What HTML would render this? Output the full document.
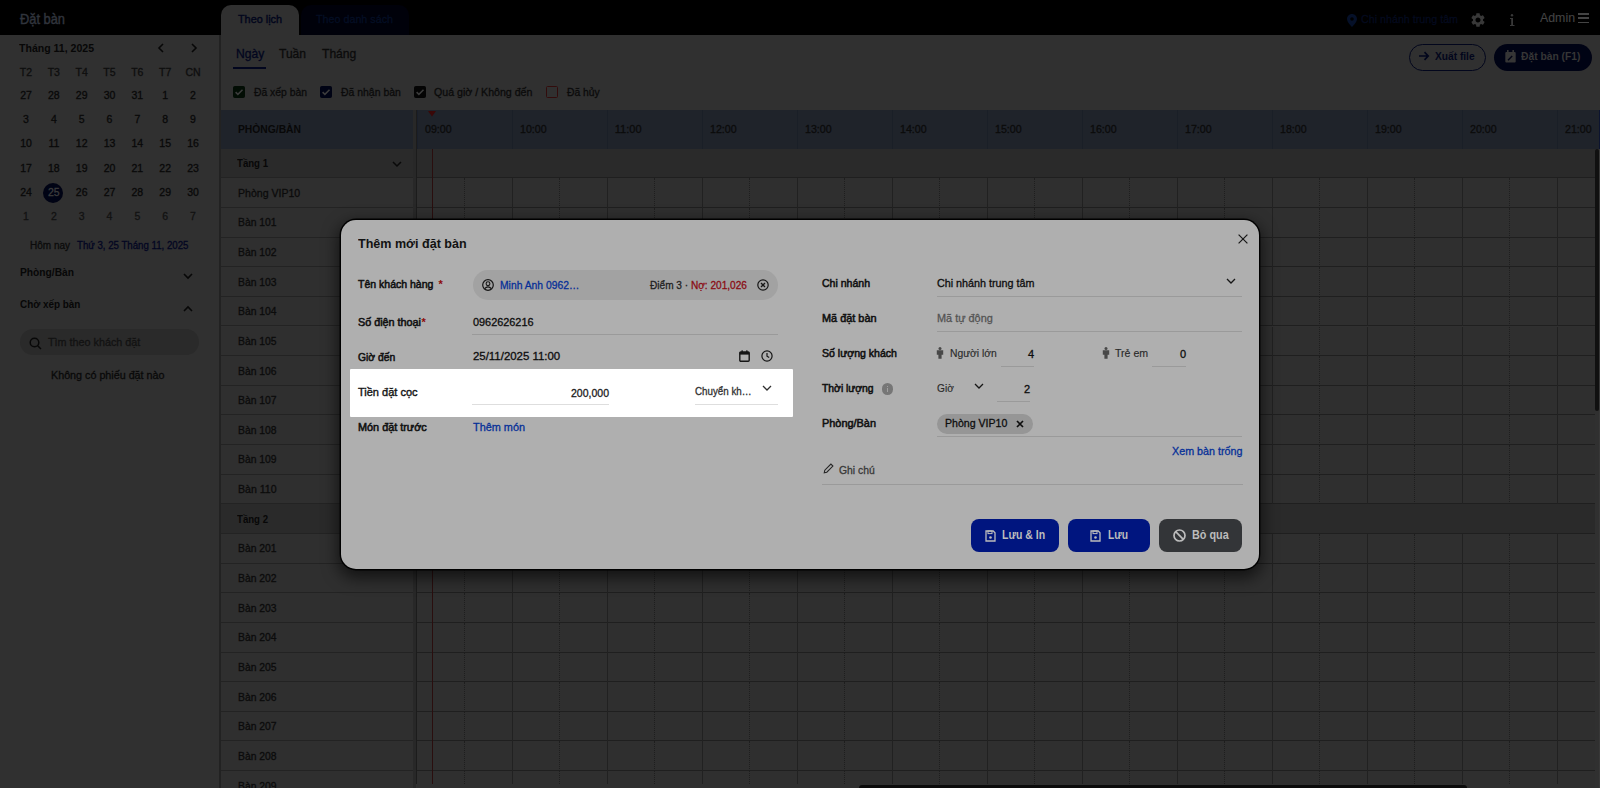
<!DOCTYPE html>
<html><head><meta charset="utf-8"><title>Đặt bàn</title>
<style>*{box-sizing:border-box;margin:0;padding:0}html,body{width:1600px;height:788px;overflow:hidden;background:#303030;font-family:"Liberation Sans",sans-serif;position:relative}.a{position:absolute;white-space:nowrap;line-height:1}svg.a{overflow:visible}</style></head><body>
<div class="a" style="left:0;top:0;width:1600px;height:35px;background:#000"></div>
<div class="a" style="left:0;top:35px;width:219px;height:753px;background:#303030"></div>
<div class="a" style="left:219px;top:35px;width:2px;height:753px;background:#222"></div>
<div class="a" style="left:221px;top:35px;width:1379px;height:753px;background:#303030"></div>
<div class="a" style="left:20.00px;top:12.14px;font-size:14px;color:#30343c;-webkit-text-stroke:0.45px #30343c;transform:scaleX(0.9175);transform-origin:0 0;">Đặt bàn</div>
<div class="a" style="left:221px;top:5px;width:78px;height:30px;background:#303030;border-radius:10px 10px 0 0"></div>
<div class="a" style="left:238.00px;top:14.11px;font-size:11px;color:#02061c;-webkit-text-stroke:0.4px #02061c;transform:scaleX(0.9856);transform-origin:0 0;">Theo lịch</div>
<div class="a" style="left:300.5px;top:5px;width:108.5px;height:30px;background:#00010a;border-radius:10px 10px 0 0"></div>
<div class="a" style="left:315.80px;top:14.11px;font-size:11px;color:#040e24;-webkit-text-stroke:0.3px #040e24;transform:scaleX(0.9760);transform-origin:0 0;">Theo danh sách</div>
<svg class="a" style="left:1347px;top:13.5px" width="10" height="13" viewBox="0 0 10 13"><path d="M5 0C2.2 0 0 2.2 0 5c0 3.4 5 8 5 8s5-4.6 5-8C10 2.2 7.8 0 5 0zm0 6.8A1.8 1.8 0 1 1 5 3.2a1.8 1.8 0 0 1 0 3.6z" fill="#051028"/></svg>
<div class="a" style="left:1361.00px;top:14.11px;font-size:11px;color:#040a1e;-webkit-text-stroke:0.3px #040a1e;transform:scaleX(0.9732);transform-origin:0 0;">Chi nhánh trung tâm</div>
<svg class="a" style="left:1470.5px;top:13px" width="14" height="14" viewBox="2 2 20 20"><path fill="#383838" d="M19.14 12.94c.04-.3.06-.61.06-.94 0-.32-.02-.64-.07-.94l2.03-1.58a.49.49 0 0 0 .12-.61l-1.92-3.32a.49.49 0 0 0-.59-.22l-2.39.96c-.5-.38-1.03-.7-1.62-.94l-.36-2.54a.48.48 0 0 0-.48-.41h-3.84c-.24 0-.43.17-.47.41l-.36 2.54c-.59.24-1.13.57-1.62.94l-2.39-.96a.48.48 0 0 0-.59.22L2.74 8.87c-.12.21-.08.47.12.61l2.03 1.58c-.05.3-.09.63-.09.94s.02.64.07.94l-2.03 1.58a.49.49 0 0 0-.12.61l1.92 3.32c.12.22.37.29.59.22l2.39-.96c.5.38 1.03.7 1.62.94l.36 2.54c.05.24.24.41.48.41h3.84c.24 0 .44-.17.47-.41l.36-2.54c.59-.24 1.13-.56 1.62-.94l2.39.96c.22.08.47 0 .59-.22l1.92-3.32c.12-.22.07-.47-.12-.61l-2.01-1.58zM12 15.6c-1.98 0-3.6-1.62-3.6-3.6s1.62-3.6 3.6-3.6 3.6 1.62 3.6 3.6-1.62 3.6-3.6 3.6z"/></svg>
<svg class="a" style="left:1508.8px;top:14.2px" width="6" height="12" viewBox="0 0 6 12"><circle cx="3" cy="1.3" r="1.2" fill="#383838"/><path d="M1 4h3v7h1.5v1h-4.5v-1h1.2V5H1z" fill="#383838"/></svg>
<div class="a" style="left:1539.50px;top:11.23px;font-size:13px;color:#444444;-webkit-text-stroke:0.1px #444;transform:scaleX(0.9496);transform-origin:0 0;">Admin</div>
<div class="a" style="left:1577.8px;top:12.9px;width:11.5px;height:1.7px;background:#444"></div><div class="a" style="left:1577.8px;top:17.3px;width:11.5px;height:1.7px;background:#444"></div><div class="a" style="left:1577.8px;top:21.7px;width:11.5px;height:1.7px;background:#444"></div>
<div class="a" style="left:19.00px;top:43.11px;font-size:11px;color:#070707;font-weight:bold;transform:scaleX(0.9583);transform-origin:0 0;">Tháng 11, 2025</div>
<svg class="a" style="left:156.5px;top:43px" width="8" height="10" viewBox="0 0 8 10"><path d="M6 1L2 5l4 4" stroke="#070707" stroke-width="1.6" fill="none"/></svg>
<svg class="a" style="left:190px;top:43px" width="8" height="10" viewBox="0 0 8 10"><path d="M2 1l4 4-4 4" stroke="#070707" stroke-width="1.6" fill="none"/></svg>
<div class="a" style="left:19.87px;top:66.86px;font-size:10.5px;color:#0e0e0e;-webkit-text-stroke:0.3px #0e0e0e;">T2</div>
<div class="a" style="left:47.70px;top:66.86px;font-size:10.5px;color:#0e0e0e;-webkit-text-stroke:0.3px #0e0e0e;">T3</div>
<div class="a" style="left:75.53px;top:66.86px;font-size:10.5px;color:#0e0e0e;-webkit-text-stroke:0.3px #0e0e0e;">T4</div>
<div class="a" style="left:103.37px;top:66.86px;font-size:10.5px;color:#0e0e0e;-webkit-text-stroke:0.3px #0e0e0e;">T5</div>
<div class="a" style="left:131.20px;top:66.86px;font-size:10.5px;color:#0e0e0e;-webkit-text-stroke:0.3px #0e0e0e;">T6</div>
<div class="a" style="left:159.03px;top:66.86px;font-size:10.5px;color:#0e0e0e;-webkit-text-stroke:0.3px #0e0e0e;">T7</div>
<div class="a" style="left:185.41px;top:66.86px;font-size:10.5px;color:#0e0e0e;-webkit-text-stroke:0.3px #0e0e0e;">CN</div>
<div class="a" style="left:20.16px;top:89.86px;font-size:10.5px;color:#090909;-webkit-text-stroke:0.3px #090909;">27</div>
<div class="a" style="left:47.99px;top:89.86px;font-size:10.5px;color:#090909;-webkit-text-stroke:0.3px #090909;">28</div>
<div class="a" style="left:75.82px;top:89.86px;font-size:10.5px;color:#090909;-webkit-text-stroke:0.3px #090909;">29</div>
<div class="a" style="left:103.66px;top:89.86px;font-size:10.5px;color:#090909;-webkit-text-stroke:0.3px #090909;">30</div>
<div class="a" style="left:131.49px;top:89.86px;font-size:10.5px;color:#090909;-webkit-text-stroke:0.3px #090909;">31</div>
<div class="a" style="left:162.24px;top:89.86px;font-size:10.5px;color:#090909;-webkit-text-stroke:0.3px #090909;">1</div>
<div class="a" style="left:190.08px;top:89.86px;font-size:10.5px;color:#090909;-webkit-text-stroke:0.3px #090909;">2</div>
<div class="a" style="left:23.08px;top:113.86px;font-size:10.5px;color:#090909;-webkit-text-stroke:0.3px #090909;">3</div>
<div class="a" style="left:50.91px;top:113.86px;font-size:10.5px;color:#090909;-webkit-text-stroke:0.3px #090909;">4</div>
<div class="a" style="left:78.74px;top:113.86px;font-size:10.5px;color:#090909;-webkit-text-stroke:0.3px #090909;">5</div>
<div class="a" style="left:106.58px;top:113.86px;font-size:10.5px;color:#090909;-webkit-text-stroke:0.3px #090909;">6</div>
<div class="a" style="left:134.41px;top:113.86px;font-size:10.5px;color:#090909;-webkit-text-stroke:0.3px #090909;">7</div>
<div class="a" style="left:162.24px;top:113.86px;font-size:10.5px;color:#090909;-webkit-text-stroke:0.3px #090909;">8</div>
<div class="a" style="left:190.08px;top:113.86px;font-size:10.5px;color:#090909;-webkit-text-stroke:0.3px #090909;">9</div>
<div class="a" style="left:20.16px;top:138.35px;font-size:10.5px;color:#090909;-webkit-text-stroke:0.3px #090909;">10</div>
<div class="a" style="left:48.38px;top:138.35px;font-size:10.5px;color:#090909;-webkit-text-stroke:0.3px #090909;">11</div>
<div class="a" style="left:75.82px;top:138.35px;font-size:10.5px;color:#090909;-webkit-text-stroke:0.3px #090909;">12</div>
<div class="a" style="left:103.66px;top:138.35px;font-size:10.5px;color:#090909;-webkit-text-stroke:0.3px #090909;">13</div>
<div class="a" style="left:131.49px;top:138.35px;font-size:10.5px;color:#090909;-webkit-text-stroke:0.3px #090909;">14</div>
<div class="a" style="left:159.32px;top:138.35px;font-size:10.5px;color:#090909;-webkit-text-stroke:0.3px #090909;">15</div>
<div class="a" style="left:187.16px;top:138.35px;font-size:10.5px;color:#090909;-webkit-text-stroke:0.3px #090909;">16</div>
<div class="a" style="left:20.16px;top:162.85px;font-size:10.5px;color:#090909;-webkit-text-stroke:0.3px #090909;">17</div>
<div class="a" style="left:47.99px;top:162.85px;font-size:10.5px;color:#090909;-webkit-text-stroke:0.3px #090909;">18</div>
<div class="a" style="left:75.82px;top:162.85px;font-size:10.5px;color:#090909;-webkit-text-stroke:0.3px #090909;">19</div>
<div class="a" style="left:103.66px;top:162.85px;font-size:10.5px;color:#090909;-webkit-text-stroke:0.3px #090909;">20</div>
<div class="a" style="left:131.49px;top:162.85px;font-size:10.5px;color:#090909;-webkit-text-stroke:0.3px #090909;">21</div>
<div class="a" style="left:159.32px;top:162.85px;font-size:10.5px;color:#090909;-webkit-text-stroke:0.3px #090909;">22</div>
<div class="a" style="left:187.16px;top:162.85px;font-size:10.5px;color:#090909;-webkit-text-stroke:0.3px #090909;">23</div>
<div class="a" style="left:20.16px;top:187.35px;font-size:10.5px;color:#090909;-webkit-text-stroke:0.3px #090909;">24</div>
<div class="a" style="left:42.9px;top:183.1px;width:20px;height:20px;border-radius:50%;background:#000314"></div>
<div class="a" style="left:47.99px;top:187.35px;font-size:10.5px;color:#3c3c3c;-webkit-text-stroke:0.3px #3c3c3c;">25</div>
<div class="a" style="left:75.82px;top:187.35px;font-size:10.5px;color:#090909;-webkit-text-stroke:0.3px #090909;">26</div>
<div class="a" style="left:103.66px;top:187.35px;font-size:10.5px;color:#090909;-webkit-text-stroke:0.3px #090909;">27</div>
<div class="a" style="left:131.49px;top:187.35px;font-size:10.5px;color:#090909;-webkit-text-stroke:0.3px #090909;">28</div>
<div class="a" style="left:159.32px;top:187.35px;font-size:10.5px;color:#090909;-webkit-text-stroke:0.3px #090909;">29</div>
<div class="a" style="left:187.16px;top:187.35px;font-size:10.5px;color:#090909;-webkit-text-stroke:0.3px #090909;">30</div>
<div class="a" style="left:23.08px;top:211.35px;font-size:10.5px;color:#121212;-webkit-text-stroke:0.3px #121212;">1</div>
<div class="a" style="left:50.91px;top:211.35px;font-size:10.5px;color:#121212;-webkit-text-stroke:0.3px #121212;">2</div>
<div class="a" style="left:78.74px;top:211.35px;font-size:10.5px;color:#121212;-webkit-text-stroke:0.3px #121212;">3</div>
<div class="a" style="left:106.58px;top:211.35px;font-size:10.5px;color:#121212;-webkit-text-stroke:0.3px #121212;">4</div>
<div class="a" style="left:134.41px;top:211.35px;font-size:10.5px;color:#121212;-webkit-text-stroke:0.3px #121212;">5</div>
<div class="a" style="left:162.24px;top:211.35px;font-size:10.5px;color:#121212;-webkit-text-stroke:0.3px #121212;">6</div>
<div class="a" style="left:190.08px;top:211.35px;font-size:10.5px;color:#121212;-webkit-text-stroke:0.3px #121212;">7</div>
<div class="a" style="left:30.00px;top:240.60px;font-size:10px;color:#0b0b0b;-webkit-text-stroke:0.3px #0b0b0b;">Hôm nay</div>
<div class="a" style="left:77.20px;top:240.60px;font-size:10px;color:#030622;-webkit-text-stroke:0.3px #030622;transform:scaleX(0.9669);transform-origin:0 0;">Thứ 3, 25 Tháng 11, 2025</div>
<div class="a" style="left:19.80px;top:267.11px;font-size:11px;color:#070707;font-weight:bold;transform:scaleX(0.9300);transform-origin:0 0;">Phòng/Bàn</div>
<svg class="a" style="left:182.5px;top:273px" width="10" height="7" viewBox="0 0 10 7"><path d="M1 1l4 4 4-4" stroke="#070707" stroke-width="1.6" fill="none"/></svg>
<div class="a" style="left:19.80px;top:298.61px;font-size:11px;color:#070707;font-weight:bold;transform:scaleX(0.9000);transform-origin:0 0;">Chờ xếp bàn</div>
<svg class="a" style="left:182.5px;top:305px" width="10" height="7" viewBox="0 0 10 7"><path d="M1 6l4-4 4 4" stroke="#070707" stroke-width="1.6" fill="none"/></svg>
<div class="a" style="left:20px;top:329px;width:179px;height:26px;border-radius:13px;background:#2a2a2a"></div>
<svg class="a" style="left:29px;top:337px" width="13" height="13" viewBox="0 0 13 13"><circle cx="5.5" cy="5.5" r="4.3" stroke="#080808" stroke-width="1.5" fill="none"/><path d="M8.7 8.7l3.3 3.3" stroke="#080808" stroke-width="1.5"/></svg>
<div class="a" style="left:47.90px;top:337.11px;font-size:11px;color:#121212;-webkit-text-stroke:0.3px #121212;transform:scaleX(0.9801);transform-origin:0 0;">Tìm theo khách đặt</div>
<div class="a" style="left:50.50px;top:369.61px;font-size:11px;color:#090909;-webkit-text-stroke:0.3px #090909;transform:scaleX(0.9766);transform-origin:0 0;">Không có phiếu đặt nào</div>
<div class="a" style="left:235.60px;top:47.88px;font-size:12.5px;color:#02061e;-webkit-text-stroke:0.3px #02061e;transform:scaleX(0.9662);transform-origin:0 0;">Ngày</div>
<div class="a" style="left:233px;top:66.5px;width:33px;height:2px;background:#02061e"></div>
<div class="a" style="left:279.40px;top:47.88px;font-size:12.5px;color:#0b0b0b;-webkit-text-stroke:0.3px #0b0b0b;transform:scaleX(0.9632);transform-origin:0 0;">Tuần</div>
<div class="a" style="left:321.90px;top:47.88px;font-size:12.5px;color:#0b0b0b;-webkit-text-stroke:0.3px #0b0b0b;transform:scaleX(0.9675);transform-origin:0 0;">Tháng</div>
<div class="a" style="left:233px;top:86px;width:12px;height:12px;border-radius:1.5px;background:#020d04;border:1.5px solid #020d04"></div><svg class="a" style="left:233px;top:86px" width="12" height="12" viewBox="0 0 12 12"><path d="M2.6 6.1l2.3 2.3 4.6-4.6" stroke="#3c3c3c" stroke-width="1.5" fill="none"/></svg>
<div class="a" style="left:254.40px;top:86.61px;font-size:11px;color:#0b0b0b;-webkit-text-stroke:0.3px #0b0b0b;transform:scaleX(0.9420);transform-origin:0 0;">Đã xếp bàn</div>
<div class="a" style="left:320px;top:86px;width:12px;height:12px;border-radius:1.5px;background:#000314;border:1.5px solid #000314"></div><svg class="a" style="left:320px;top:86px" width="12" height="12" viewBox="0 0 12 12"><path d="M2.6 6.1l2.3 2.3 4.6-4.6" stroke="#3c3c3c" stroke-width="1.5" fill="none"/></svg>
<div class="a" style="left:341.20px;top:86.61px;font-size:11px;color:#0b0b0b;-webkit-text-stroke:0.3px #0b0b0b;transform:scaleX(0.9492);transform-origin:0 0;">Đã nhận bàn</div>
<div class="a" style="left:414px;top:86px;width:12px;height:12px;border-radius:1.5px;background:#040404;border:1.5px solid #040404"></div><svg class="a" style="left:414px;top:86px" width="12" height="12" viewBox="0 0 12 12"><path d="M2.6 6.1l2.3 2.3 4.6-4.6" stroke="#3c3c3c" stroke-width="1.5" fill="none"/></svg>
<div class="a" style="left:434.40px;top:86.61px;font-size:11px;color:#0b0b0b;-webkit-text-stroke:0.3px #0b0b0b;transform:scaleX(0.9646);transform-origin:0 0;">Quá giờ / Không đến</div>
<div class="a" style="left:546px;top:86px;width:12px;height:12px;border-radius:1.5px;background:transparent;border:1.5px solid #320c0c"></div>
<div class="a" style="left:567.00px;top:86.61px;font-size:11px;color:#0b0b0b;-webkit-text-stroke:0.3px #0b0b0b;transform:scaleX(0.9409);transform-origin:0 0;">Đã hủy</div>
<div class="a" style="left:1408.5px;top:43.5px;width:77.5px;height:27.5px;border-radius:14px;border:1.5px solid #02061c"></div>
<svg class="a" style="left:1418px;top:49.8px" width="12" height="12" viewBox="0 0 12 12"><path d="M1 6h9.2M6.5 2.2L10.2 6l-3.7 3.8" stroke="#02061c" stroke-width="1.7" fill="none"/></svg>
<div class="a" style="left:1435.20px;top:50.61px;font-size:11px;color:#02061c;font-weight:bold;transform:scaleX(0.9253);transform-origin:0 0;">Xuất file</div>
<div class="a" style="left:1494px;top:43.5px;width:98px;height:27.5px;border-radius:14px;background:#000314"></div>
<svg class="a" style="left:1505px;top:50px" width="11" height="12.5" viewBox="0 0 11 12.5"><rect x="0.3" y="2" width="10.4" height="10.5" rx="1" fill="#353535"/><rect x="2" y="0" width="1.6" height="3" fill="#353535"/><rect x="7.4" y="0" width="1.6" height="3" fill="#353535"/><path d="M3 10.3l4.2-4.2" stroke="#000314" stroke-width="1.4"/></svg>
<div class="a" style="left:1520.80px;top:50.81px;font-size:11px;color:#363636;font-weight:bold;transform:scaleX(0.9345);transform-origin:0 0;">Đặt bàn (F1)</div>
<div class="a" style="left:221px;top:110px;width:191.5px;height:38.66px;background:#1f232a"></div>
<div class="a" style="left:416.9px;top:110px;width:1183.1px;height:38.66px;background:#1f232a;border-right:1px solid #0c1430;border-left:1px solid #1a1f2a"></div>
<div class="a" style="left:237.60px;top:123.61px;font-size:11px;color:#080808;font-weight:bold;transform:scaleX(0.9370);transform-origin:0 0;">PHÒNG/BÀN</div>
<div class="a" style="left:424.80px;top:123.61px;font-size:11px;color:#0b0b0b;-webkit-text-stroke:0.3px #0b0b0b;transform:scaleX(0.9698);transform-origin:0 0;">09:00</div>
<div class="a" style="left:512.0px;top:110px;width:1px;height:38.66px;background:#1a1f27"></div>
<div class="a" style="left:519.80px;top:123.61px;font-size:11px;color:#0b0b0b;-webkit-text-stroke:0.3px #0b0b0b;transform:scaleX(0.9698);transform-origin:0 0;">10:00</div>
<div class="a" style="left:607.0px;top:110px;width:1px;height:38.66px;background:#1a1f27"></div>
<div class="a" style="left:614.80px;top:123.61px;font-size:11px;color:#0b0b0b;-webkit-text-stroke:0.3px #0b0b0b;">11:00</div>
<div class="a" style="left:702.0px;top:110px;width:1px;height:38.66px;background:#1a1f27"></div>
<div class="a" style="left:709.80px;top:123.61px;font-size:11px;color:#0b0b0b;-webkit-text-stroke:0.3px #0b0b0b;transform:scaleX(0.9698);transform-origin:0 0;">12:00</div>
<div class="a" style="left:797.0px;top:110px;width:1px;height:38.66px;background:#1a1f27"></div>
<div class="a" style="left:804.80px;top:123.61px;font-size:11px;color:#0b0b0b;-webkit-text-stroke:0.3px #0b0b0b;transform:scaleX(0.9698);transform-origin:0 0;">13:00</div>
<div class="a" style="left:892.0px;top:110px;width:1px;height:38.66px;background:#1a1f27"></div>
<div class="a" style="left:899.80px;top:123.61px;font-size:11px;color:#0b0b0b;-webkit-text-stroke:0.3px #0b0b0b;transform:scaleX(0.9698);transform-origin:0 0;">14:00</div>
<div class="a" style="left:987.0px;top:110px;width:1px;height:38.66px;background:#1a1f27"></div>
<div class="a" style="left:994.80px;top:123.61px;font-size:11px;color:#0b0b0b;-webkit-text-stroke:0.3px #0b0b0b;transform:scaleX(0.9698);transform-origin:0 0;">15:00</div>
<div class="a" style="left:1082.0px;top:110px;width:1px;height:38.66px;background:#1a1f27"></div>
<div class="a" style="left:1089.80px;top:123.61px;font-size:11px;color:#0b0b0b;-webkit-text-stroke:0.3px #0b0b0b;transform:scaleX(0.9698);transform-origin:0 0;">16:00</div>
<div class="a" style="left:1177.0px;top:110px;width:1px;height:38.66px;background:#1a1f27"></div>
<div class="a" style="left:1184.80px;top:123.61px;font-size:11px;color:#0b0b0b;-webkit-text-stroke:0.3px #0b0b0b;transform:scaleX(0.9698);transform-origin:0 0;">17:00</div>
<div class="a" style="left:1272.0px;top:110px;width:1px;height:38.66px;background:#1a1f27"></div>
<div class="a" style="left:1279.80px;top:123.61px;font-size:11px;color:#0b0b0b;-webkit-text-stroke:0.3px #0b0b0b;transform:scaleX(0.9698);transform-origin:0 0;">18:00</div>
<div class="a" style="left:1367.0px;top:110px;width:1px;height:38.66px;background:#1a1f27"></div>
<div class="a" style="left:1374.80px;top:123.61px;font-size:11px;color:#0b0b0b;-webkit-text-stroke:0.3px #0b0b0b;transform:scaleX(0.9698);transform-origin:0 0;">19:00</div>
<div class="a" style="left:1462.0px;top:110px;width:1px;height:38.66px;background:#1a1f27"></div>
<div class="a" style="left:1469.80px;top:123.61px;font-size:11px;color:#0b0b0b;-webkit-text-stroke:0.3px #0b0b0b;transform:scaleX(0.9698);transform-origin:0 0;">20:00</div>
<div class="a" style="left:1557.0px;top:110px;width:1px;height:38.66px;background:#1a1f27"></div>
<div class="a" style="left:1564.80px;top:123.61px;font-size:11px;color:#0b0b0b;-webkit-text-stroke:0.3px #0b0b0b;transform:scaleX(0.9698);transform-origin:0 0;">21:00</div>
<div class="a" style="left:412.5px;top:110px;width:3px;height:678px;background:#282828"></div><div class="a" style="left:415.5px;top:110px;width:1.4px;height:674.4px;background:#1c1c1c"></div>
<div class="a" style="left:221px;top:148.66px;width:191.5px;height:29.64px;background:#2a2a2a;border-bottom:1px solid #232323"></div>
<div class="a" style="left:417px;top:148.66px;width:1178px;height:29.64px;background:#2a2a2a;border-bottom:1px solid #1f1f1f"></div>
<div class="a" style="left:237.30px;top:158.09px;font-size:11px;color:#070707;font-weight:bold;transform:scaleX(0.8744);transform-origin:0 0;">Tầng 1</div>
<div class="a" style="left:221px;top:178.30px;width:191.5px;height:29.64px;background:#2f2f2f;border-bottom:1px solid #232323"></div>
<div class="a" style="left:417px;top:178.30px;width:1178px;height:29.64px;background:#2f2f2f;border-bottom:1px solid #1f1f1f"></div>
<div class="a" style="left:237.70px;top:187.73px;font-size:11px;color:#0b0b0b;-webkit-text-stroke:0.3px #0b0b0b;transform:scaleX(0.9592);transform-origin:0 0;">Phòng VIP10</div>
<div class="a" style="left:221px;top:207.94px;width:191.5px;height:29.64px;background:#2f2f2f;border-bottom:1px solid #232323"></div>
<div class="a" style="left:417px;top:207.94px;width:1178px;height:29.64px;background:#2f2f2f;border-bottom:1px solid #1f1f1f"></div>
<div class="a" style="left:237.70px;top:217.37px;font-size:11px;color:#0b0b0b;-webkit-text-stroke:0.3px #0b0b0b;transform:scaleX(0.9418);transform-origin:0 0;">Bàn 101</div>
<div class="a" style="left:221px;top:237.58px;width:191.5px;height:29.64px;background:#2f2f2f;border-bottom:1px solid #232323"></div>
<div class="a" style="left:417px;top:237.58px;width:1178px;height:29.64px;background:#2f2f2f;border-bottom:1px solid #1f1f1f"></div>
<div class="a" style="left:237.70px;top:247.01px;font-size:11px;color:#0b0b0b;-webkit-text-stroke:0.3px #0b0b0b;transform:scaleX(0.9418);transform-origin:0 0;">Bàn 102</div>
<div class="a" style="left:221px;top:267.22px;width:191.5px;height:29.64px;background:#2f2f2f;border-bottom:1px solid #232323"></div>
<div class="a" style="left:417px;top:267.22px;width:1178px;height:29.64px;background:#2f2f2f;border-bottom:1px solid #1f1f1f"></div>
<div class="a" style="left:237.70px;top:276.65px;font-size:11px;color:#0b0b0b;-webkit-text-stroke:0.3px #0b0b0b;transform:scaleX(0.9418);transform-origin:0 0;">Bàn 103</div>
<div class="a" style="left:221px;top:296.86px;width:191.5px;height:29.64px;background:#2f2f2f;border-bottom:1px solid #232323"></div>
<div class="a" style="left:417px;top:296.86px;width:1178px;height:29.64px;background:#2f2f2f;border-bottom:1px solid #1f1f1f"></div>
<div class="a" style="left:237.70px;top:306.29px;font-size:11px;color:#0b0b0b;-webkit-text-stroke:0.3px #0b0b0b;transform:scaleX(0.9418);transform-origin:0 0;">Bàn 104</div>
<div class="a" style="left:221px;top:326.50px;width:191.5px;height:29.64px;background:#2f2f2f;border-bottom:1px solid #232323"></div>
<div class="a" style="left:417px;top:326.50px;width:1178px;height:29.64px;background:#2f2f2f;border-bottom:1px solid #1f1f1f"></div>
<div class="a" style="left:237.70px;top:335.93px;font-size:11px;color:#0b0b0b;-webkit-text-stroke:0.3px #0b0b0b;transform:scaleX(0.9418);transform-origin:0 0;">Bàn 105</div>
<div class="a" style="left:221px;top:356.14px;width:191.5px;height:29.64px;background:#2f2f2f;border-bottom:1px solid #232323"></div>
<div class="a" style="left:417px;top:356.14px;width:1178px;height:29.64px;background:#2f2f2f;border-bottom:1px solid #1f1f1f"></div>
<div class="a" style="left:237.70px;top:365.57px;font-size:11px;color:#0b0b0b;-webkit-text-stroke:0.3px #0b0b0b;transform:scaleX(0.9418);transform-origin:0 0;">Bàn 106</div>
<div class="a" style="left:221px;top:385.78px;width:191.5px;height:29.64px;background:#2f2f2f;border-bottom:1px solid #232323"></div>
<div class="a" style="left:417px;top:385.78px;width:1178px;height:29.64px;background:#2f2f2f;border-bottom:1px solid #1f1f1f"></div>
<div class="a" style="left:237.70px;top:395.21px;font-size:11px;color:#0b0b0b;-webkit-text-stroke:0.3px #0b0b0b;transform:scaleX(0.9418);transform-origin:0 0;">Bàn 107</div>
<div class="a" style="left:221px;top:415.42px;width:191.5px;height:29.64px;background:#2f2f2f;border-bottom:1px solid #232323"></div>
<div class="a" style="left:417px;top:415.42px;width:1178px;height:29.64px;background:#2f2f2f;border-bottom:1px solid #1f1f1f"></div>
<div class="a" style="left:237.70px;top:424.85px;font-size:11px;color:#0b0b0b;-webkit-text-stroke:0.3px #0b0b0b;transform:scaleX(0.9418);transform-origin:0 0;">Bàn 108</div>
<div class="a" style="left:221px;top:445.06px;width:191.5px;height:29.64px;background:#2f2f2f;border-bottom:1px solid #232323"></div>
<div class="a" style="left:417px;top:445.06px;width:1178px;height:29.64px;background:#2f2f2f;border-bottom:1px solid #1f1f1f"></div>
<div class="a" style="left:237.70px;top:454.49px;font-size:11px;color:#0b0b0b;-webkit-text-stroke:0.3px #0b0b0b;transform:scaleX(0.9418);transform-origin:0 0;">Bàn 109</div>
<div class="a" style="left:221px;top:474.70px;width:191.5px;height:29.64px;background:#2f2f2f;border-bottom:1px solid #232323"></div>
<div class="a" style="left:417px;top:474.70px;width:1178px;height:29.64px;background:#2f2f2f;border-bottom:1px solid #1f1f1f"></div>
<div class="a" style="left:237.70px;top:484.13px;font-size:11px;color:#0b0b0b;-webkit-text-stroke:0.3px #0b0b0b;transform:scaleX(0.9609);transform-origin:0 0;">Bàn 110</div>
<div class="a" style="left:221px;top:504.34px;width:191.5px;height:29.64px;background:#2a2a2a;border-bottom:1px solid #232323"></div>
<div class="a" style="left:417px;top:504.34px;width:1178px;height:29.64px;background:#2a2a2a;border-bottom:1px solid #1f1f1f"></div>
<div class="a" style="left:237.30px;top:513.77px;font-size:11px;color:#070707;font-weight:bold;transform:scaleX(0.8744);transform-origin:0 0;">Tầng 2</div>
<div class="a" style="left:221px;top:533.98px;width:191.5px;height:29.64px;background:#2f2f2f;border-bottom:1px solid #232323"></div>
<div class="a" style="left:417px;top:533.98px;width:1178px;height:29.64px;background:#2f2f2f;border-bottom:1px solid #1f1f1f"></div>
<div class="a" style="left:237.70px;top:543.41px;font-size:11px;color:#0b0b0b;-webkit-text-stroke:0.3px #0b0b0b;transform:scaleX(0.9418);transform-origin:0 0;">Bàn 201</div>
<div class="a" style="left:221px;top:563.62px;width:191.5px;height:29.64px;background:#2f2f2f;border-bottom:1px solid #232323"></div>
<div class="a" style="left:417px;top:563.62px;width:1178px;height:29.64px;background:#2f2f2f;border-bottom:1px solid #1f1f1f"></div>
<div class="a" style="left:237.70px;top:573.05px;font-size:11px;color:#0b0b0b;-webkit-text-stroke:0.3px #0b0b0b;transform:scaleX(0.9418);transform-origin:0 0;">Bàn 202</div>
<div class="a" style="left:221px;top:593.26px;width:191.5px;height:29.64px;background:#2f2f2f;border-bottom:1px solid #232323"></div>
<div class="a" style="left:417px;top:593.26px;width:1178px;height:29.64px;background:#2f2f2f;border-bottom:1px solid #1f1f1f"></div>
<div class="a" style="left:237.70px;top:602.69px;font-size:11px;color:#0b0b0b;-webkit-text-stroke:0.3px #0b0b0b;transform:scaleX(0.9418);transform-origin:0 0;">Bàn 203</div>
<div class="a" style="left:221px;top:622.90px;width:191.5px;height:29.64px;background:#2f2f2f;border-bottom:1px solid #232323"></div>
<div class="a" style="left:417px;top:622.90px;width:1178px;height:29.64px;background:#2f2f2f;border-bottom:1px solid #1f1f1f"></div>
<div class="a" style="left:237.70px;top:632.33px;font-size:11px;color:#0b0b0b;-webkit-text-stroke:0.3px #0b0b0b;transform:scaleX(0.9418);transform-origin:0 0;">Bàn 204</div>
<div class="a" style="left:221px;top:652.54px;width:191.5px;height:29.64px;background:#2f2f2f;border-bottom:1px solid #232323"></div>
<div class="a" style="left:417px;top:652.54px;width:1178px;height:29.64px;background:#2f2f2f;border-bottom:1px solid #1f1f1f"></div>
<div class="a" style="left:237.70px;top:661.97px;font-size:11px;color:#0b0b0b;-webkit-text-stroke:0.3px #0b0b0b;transform:scaleX(0.9418);transform-origin:0 0;">Bàn 205</div>
<div class="a" style="left:221px;top:682.18px;width:191.5px;height:29.64px;background:#2f2f2f;border-bottom:1px solid #232323"></div>
<div class="a" style="left:417px;top:682.18px;width:1178px;height:29.64px;background:#2f2f2f;border-bottom:1px solid #1f1f1f"></div>
<div class="a" style="left:237.70px;top:691.61px;font-size:11px;color:#0b0b0b;-webkit-text-stroke:0.3px #0b0b0b;transform:scaleX(0.9418);transform-origin:0 0;">Bàn 206</div>
<div class="a" style="left:221px;top:711.82px;width:191.5px;height:29.64px;background:#2f2f2f;border-bottom:1px solid #232323"></div>
<div class="a" style="left:417px;top:711.82px;width:1178px;height:29.64px;background:#2f2f2f;border-bottom:1px solid #1f1f1f"></div>
<div class="a" style="left:237.70px;top:721.25px;font-size:11px;color:#0b0b0b;-webkit-text-stroke:0.3px #0b0b0b;transform:scaleX(0.9418);transform-origin:0 0;">Bàn 207</div>
<div class="a" style="left:221px;top:741.46px;width:191.5px;height:29.64px;background:#2f2f2f;border-bottom:1px solid #232323"></div>
<div class="a" style="left:417px;top:741.46px;width:1178px;height:29.64px;background:#2f2f2f;border-bottom:1px solid #1f1f1f"></div>
<div class="a" style="left:237.70px;top:750.89px;font-size:11px;color:#0b0b0b;-webkit-text-stroke:0.3px #0b0b0b;transform:scaleX(0.9418);transform-origin:0 0;">Bàn 208</div>
<div class="a" style="left:221px;top:771.10px;width:191.5px;height:29.64px;background:#2f2f2f;border-bottom:1px solid #232323"></div>
<div class="a" style="left:417px;top:771.10px;width:1178px;height:29.64px;background:#2f2f2f;border-bottom:1px solid #1f1f1f"></div>
<div class="a" style="left:237.70px;top:780.53px;font-size:11px;color:#0b0b0b;-webkit-text-stroke:0.3px #0b0b0b;transform:scaleX(0.9418);transform-origin:0 0;">Bàn 209</div>
<svg class="a" style="left:392px;top:160.5px" width="10" height="7" viewBox="0 0 10 7"><path d="M1 1l4 4 4-4" stroke="#090909" stroke-width="1.5" fill="none"/></svg>
<div class="a" style="left:464.0px;top:178.30px;width:0;height:29.64px;border-left:1px dotted #1e1e1e"></div>
<div class="a" style="left:512.0px;top:178.30px;width:1px;height:29.64px;background:#212121"></div>
<div class="a" style="left:559.0px;top:178.30px;width:0;height:29.64px;border-left:1px dotted #1e1e1e"></div>
<div class="a" style="left:607.0px;top:178.30px;width:1px;height:29.64px;background:#212121"></div>
<div class="a" style="left:654.0px;top:178.30px;width:0;height:29.64px;border-left:1px dotted #1e1e1e"></div>
<div class="a" style="left:702.0px;top:178.30px;width:1px;height:29.64px;background:#212121"></div>
<div class="a" style="left:749.0px;top:178.30px;width:0;height:29.64px;border-left:1px dotted #1e1e1e"></div>
<div class="a" style="left:797.0px;top:178.30px;width:1px;height:29.64px;background:#212121"></div>
<div class="a" style="left:844.0px;top:178.30px;width:0;height:29.64px;border-left:1px dotted #1e1e1e"></div>
<div class="a" style="left:892.0px;top:178.30px;width:1px;height:29.64px;background:#212121"></div>
<div class="a" style="left:939.0px;top:178.30px;width:0;height:29.64px;border-left:1px dotted #1e1e1e"></div>
<div class="a" style="left:987.0px;top:178.30px;width:1px;height:29.64px;background:#212121"></div>
<div class="a" style="left:1034.0px;top:178.30px;width:0;height:29.64px;border-left:1px dotted #1e1e1e"></div>
<div class="a" style="left:1082.0px;top:178.30px;width:1px;height:29.64px;background:#212121"></div>
<div class="a" style="left:1129.0px;top:178.30px;width:0;height:29.64px;border-left:1px dotted #1e1e1e"></div>
<div class="a" style="left:1177.0px;top:178.30px;width:1px;height:29.64px;background:#212121"></div>
<div class="a" style="left:1224.0px;top:178.30px;width:0;height:29.64px;border-left:1px dotted #1e1e1e"></div>
<div class="a" style="left:1272.0px;top:178.30px;width:1px;height:29.64px;background:#212121"></div>
<div class="a" style="left:1319.0px;top:178.30px;width:0;height:29.64px;border-left:1px dotted #1e1e1e"></div>
<div class="a" style="left:1367.0px;top:178.30px;width:1px;height:29.64px;background:#212121"></div>
<div class="a" style="left:1414.0px;top:178.30px;width:0;height:29.64px;border-left:1px dotted #1e1e1e"></div>
<div class="a" style="left:1462.0px;top:178.30px;width:1px;height:29.64px;background:#212121"></div>
<div class="a" style="left:1509.0px;top:178.30px;width:0;height:29.64px;border-left:1px dotted #1e1e1e"></div>
<div class="a" style="left:1557.0px;top:178.30px;width:1px;height:29.64px;background:#212121"></div>
<div class="a" style="left:1604.0px;top:178.30px;width:0;height:29.64px;border-left:1px dotted #1e1e1e"></div>
<div class="a" style="left:464.0px;top:207.94px;width:0;height:29.64px;border-left:1px dotted #1e1e1e"></div>
<div class="a" style="left:512.0px;top:207.94px;width:1px;height:29.64px;background:#212121"></div>
<div class="a" style="left:559.0px;top:207.94px;width:0;height:29.64px;border-left:1px dotted #1e1e1e"></div>
<div class="a" style="left:607.0px;top:207.94px;width:1px;height:29.64px;background:#212121"></div>
<div class="a" style="left:654.0px;top:207.94px;width:0;height:29.64px;border-left:1px dotted #1e1e1e"></div>
<div class="a" style="left:702.0px;top:207.94px;width:1px;height:29.64px;background:#212121"></div>
<div class="a" style="left:749.0px;top:207.94px;width:0;height:29.64px;border-left:1px dotted #1e1e1e"></div>
<div class="a" style="left:797.0px;top:207.94px;width:1px;height:29.64px;background:#212121"></div>
<div class="a" style="left:844.0px;top:207.94px;width:0;height:29.64px;border-left:1px dotted #1e1e1e"></div>
<div class="a" style="left:892.0px;top:207.94px;width:1px;height:29.64px;background:#212121"></div>
<div class="a" style="left:939.0px;top:207.94px;width:0;height:29.64px;border-left:1px dotted #1e1e1e"></div>
<div class="a" style="left:987.0px;top:207.94px;width:1px;height:29.64px;background:#212121"></div>
<div class="a" style="left:1034.0px;top:207.94px;width:0;height:29.64px;border-left:1px dotted #1e1e1e"></div>
<div class="a" style="left:1082.0px;top:207.94px;width:1px;height:29.64px;background:#212121"></div>
<div class="a" style="left:1129.0px;top:207.94px;width:0;height:29.64px;border-left:1px dotted #1e1e1e"></div>
<div class="a" style="left:1177.0px;top:207.94px;width:1px;height:29.64px;background:#212121"></div>
<div class="a" style="left:1224.0px;top:207.94px;width:0;height:29.64px;border-left:1px dotted #1e1e1e"></div>
<div class="a" style="left:1272.0px;top:207.94px;width:1px;height:29.64px;background:#212121"></div>
<div class="a" style="left:1319.0px;top:207.94px;width:0;height:29.64px;border-left:1px dotted #1e1e1e"></div>
<div class="a" style="left:1367.0px;top:207.94px;width:1px;height:29.64px;background:#212121"></div>
<div class="a" style="left:1414.0px;top:207.94px;width:0;height:29.64px;border-left:1px dotted #1e1e1e"></div>
<div class="a" style="left:1462.0px;top:207.94px;width:1px;height:29.64px;background:#212121"></div>
<div class="a" style="left:1509.0px;top:207.94px;width:0;height:29.64px;border-left:1px dotted #1e1e1e"></div>
<div class="a" style="left:1557.0px;top:207.94px;width:1px;height:29.64px;background:#212121"></div>
<div class="a" style="left:1604.0px;top:207.94px;width:0;height:29.64px;border-left:1px dotted #1e1e1e"></div>
<div class="a" style="left:464.0px;top:237.58px;width:0;height:29.64px;border-left:1px dotted #1e1e1e"></div>
<div class="a" style="left:512.0px;top:237.58px;width:1px;height:29.64px;background:#212121"></div>
<div class="a" style="left:559.0px;top:237.58px;width:0;height:29.64px;border-left:1px dotted #1e1e1e"></div>
<div class="a" style="left:607.0px;top:237.58px;width:1px;height:29.64px;background:#212121"></div>
<div class="a" style="left:654.0px;top:237.58px;width:0;height:29.64px;border-left:1px dotted #1e1e1e"></div>
<div class="a" style="left:702.0px;top:237.58px;width:1px;height:29.64px;background:#212121"></div>
<div class="a" style="left:749.0px;top:237.58px;width:0;height:29.64px;border-left:1px dotted #1e1e1e"></div>
<div class="a" style="left:797.0px;top:237.58px;width:1px;height:29.64px;background:#212121"></div>
<div class="a" style="left:844.0px;top:237.58px;width:0;height:29.64px;border-left:1px dotted #1e1e1e"></div>
<div class="a" style="left:892.0px;top:237.58px;width:1px;height:29.64px;background:#212121"></div>
<div class="a" style="left:939.0px;top:237.58px;width:0;height:29.64px;border-left:1px dotted #1e1e1e"></div>
<div class="a" style="left:987.0px;top:237.58px;width:1px;height:29.64px;background:#212121"></div>
<div class="a" style="left:1034.0px;top:237.58px;width:0;height:29.64px;border-left:1px dotted #1e1e1e"></div>
<div class="a" style="left:1082.0px;top:237.58px;width:1px;height:29.64px;background:#212121"></div>
<div class="a" style="left:1129.0px;top:237.58px;width:0;height:29.64px;border-left:1px dotted #1e1e1e"></div>
<div class="a" style="left:1177.0px;top:237.58px;width:1px;height:29.64px;background:#212121"></div>
<div class="a" style="left:1224.0px;top:237.58px;width:0;height:29.64px;border-left:1px dotted #1e1e1e"></div>
<div class="a" style="left:1272.0px;top:237.58px;width:1px;height:29.64px;background:#212121"></div>
<div class="a" style="left:1319.0px;top:237.58px;width:0;height:29.64px;border-left:1px dotted #1e1e1e"></div>
<div class="a" style="left:1367.0px;top:237.58px;width:1px;height:29.64px;background:#212121"></div>
<div class="a" style="left:1414.0px;top:237.58px;width:0;height:29.64px;border-left:1px dotted #1e1e1e"></div>
<div class="a" style="left:1462.0px;top:237.58px;width:1px;height:29.64px;background:#212121"></div>
<div class="a" style="left:1509.0px;top:237.58px;width:0;height:29.64px;border-left:1px dotted #1e1e1e"></div>
<div class="a" style="left:1557.0px;top:237.58px;width:1px;height:29.64px;background:#212121"></div>
<div class="a" style="left:1604.0px;top:237.58px;width:0;height:29.64px;border-left:1px dotted #1e1e1e"></div>
<div class="a" style="left:464.0px;top:267.22px;width:0;height:29.64px;border-left:1px dotted #1e1e1e"></div>
<div class="a" style="left:512.0px;top:267.22px;width:1px;height:29.64px;background:#212121"></div>
<div class="a" style="left:559.0px;top:267.22px;width:0;height:29.64px;border-left:1px dotted #1e1e1e"></div>
<div class="a" style="left:607.0px;top:267.22px;width:1px;height:29.64px;background:#212121"></div>
<div class="a" style="left:654.0px;top:267.22px;width:0;height:29.64px;border-left:1px dotted #1e1e1e"></div>
<div class="a" style="left:702.0px;top:267.22px;width:1px;height:29.64px;background:#212121"></div>
<div class="a" style="left:749.0px;top:267.22px;width:0;height:29.64px;border-left:1px dotted #1e1e1e"></div>
<div class="a" style="left:797.0px;top:267.22px;width:1px;height:29.64px;background:#212121"></div>
<div class="a" style="left:844.0px;top:267.22px;width:0;height:29.64px;border-left:1px dotted #1e1e1e"></div>
<div class="a" style="left:892.0px;top:267.22px;width:1px;height:29.64px;background:#212121"></div>
<div class="a" style="left:939.0px;top:267.22px;width:0;height:29.64px;border-left:1px dotted #1e1e1e"></div>
<div class="a" style="left:987.0px;top:267.22px;width:1px;height:29.64px;background:#212121"></div>
<div class="a" style="left:1034.0px;top:267.22px;width:0;height:29.64px;border-left:1px dotted #1e1e1e"></div>
<div class="a" style="left:1082.0px;top:267.22px;width:1px;height:29.64px;background:#212121"></div>
<div class="a" style="left:1129.0px;top:267.22px;width:0;height:29.64px;border-left:1px dotted #1e1e1e"></div>
<div class="a" style="left:1177.0px;top:267.22px;width:1px;height:29.64px;background:#212121"></div>
<div class="a" style="left:1224.0px;top:267.22px;width:0;height:29.64px;border-left:1px dotted #1e1e1e"></div>
<div class="a" style="left:1272.0px;top:267.22px;width:1px;height:29.64px;background:#212121"></div>
<div class="a" style="left:1319.0px;top:267.22px;width:0;height:29.64px;border-left:1px dotted #1e1e1e"></div>
<div class="a" style="left:1367.0px;top:267.22px;width:1px;height:29.64px;background:#212121"></div>
<div class="a" style="left:1414.0px;top:267.22px;width:0;height:29.64px;border-left:1px dotted #1e1e1e"></div>
<div class="a" style="left:1462.0px;top:267.22px;width:1px;height:29.64px;background:#212121"></div>
<div class="a" style="left:1509.0px;top:267.22px;width:0;height:29.64px;border-left:1px dotted #1e1e1e"></div>
<div class="a" style="left:1557.0px;top:267.22px;width:1px;height:29.64px;background:#212121"></div>
<div class="a" style="left:1604.0px;top:267.22px;width:0;height:29.64px;border-left:1px dotted #1e1e1e"></div>
<div class="a" style="left:464.0px;top:296.86px;width:0;height:29.64px;border-left:1px dotted #1e1e1e"></div>
<div class="a" style="left:512.0px;top:296.86px;width:1px;height:29.64px;background:#212121"></div>
<div class="a" style="left:559.0px;top:296.86px;width:0;height:29.64px;border-left:1px dotted #1e1e1e"></div>
<div class="a" style="left:607.0px;top:296.86px;width:1px;height:29.64px;background:#212121"></div>
<div class="a" style="left:654.0px;top:296.86px;width:0;height:29.64px;border-left:1px dotted #1e1e1e"></div>
<div class="a" style="left:702.0px;top:296.86px;width:1px;height:29.64px;background:#212121"></div>
<div class="a" style="left:749.0px;top:296.86px;width:0;height:29.64px;border-left:1px dotted #1e1e1e"></div>
<div class="a" style="left:797.0px;top:296.86px;width:1px;height:29.64px;background:#212121"></div>
<div class="a" style="left:844.0px;top:296.86px;width:0;height:29.64px;border-left:1px dotted #1e1e1e"></div>
<div class="a" style="left:892.0px;top:296.86px;width:1px;height:29.64px;background:#212121"></div>
<div class="a" style="left:939.0px;top:296.86px;width:0;height:29.64px;border-left:1px dotted #1e1e1e"></div>
<div class="a" style="left:987.0px;top:296.86px;width:1px;height:29.64px;background:#212121"></div>
<div class="a" style="left:1034.0px;top:296.86px;width:0;height:29.64px;border-left:1px dotted #1e1e1e"></div>
<div class="a" style="left:1082.0px;top:296.86px;width:1px;height:29.64px;background:#212121"></div>
<div class="a" style="left:1129.0px;top:296.86px;width:0;height:29.64px;border-left:1px dotted #1e1e1e"></div>
<div class="a" style="left:1177.0px;top:296.86px;width:1px;height:29.64px;background:#212121"></div>
<div class="a" style="left:1224.0px;top:296.86px;width:0;height:29.64px;border-left:1px dotted #1e1e1e"></div>
<div class="a" style="left:1272.0px;top:296.86px;width:1px;height:29.64px;background:#212121"></div>
<div class="a" style="left:1319.0px;top:296.86px;width:0;height:29.64px;border-left:1px dotted #1e1e1e"></div>
<div class="a" style="left:1367.0px;top:296.86px;width:1px;height:29.64px;background:#212121"></div>
<div class="a" style="left:1414.0px;top:296.86px;width:0;height:29.64px;border-left:1px dotted #1e1e1e"></div>
<div class="a" style="left:1462.0px;top:296.86px;width:1px;height:29.64px;background:#212121"></div>
<div class="a" style="left:1509.0px;top:296.86px;width:0;height:29.64px;border-left:1px dotted #1e1e1e"></div>
<div class="a" style="left:1557.0px;top:296.86px;width:1px;height:29.64px;background:#212121"></div>
<div class="a" style="left:1604.0px;top:296.86px;width:0;height:29.64px;border-left:1px dotted #1e1e1e"></div>
<div class="a" style="left:464.0px;top:326.50px;width:0;height:29.64px;border-left:1px dotted #1e1e1e"></div>
<div class="a" style="left:512.0px;top:326.50px;width:1px;height:29.64px;background:#212121"></div>
<div class="a" style="left:559.0px;top:326.50px;width:0;height:29.64px;border-left:1px dotted #1e1e1e"></div>
<div class="a" style="left:607.0px;top:326.50px;width:1px;height:29.64px;background:#212121"></div>
<div class="a" style="left:654.0px;top:326.50px;width:0;height:29.64px;border-left:1px dotted #1e1e1e"></div>
<div class="a" style="left:702.0px;top:326.50px;width:1px;height:29.64px;background:#212121"></div>
<div class="a" style="left:749.0px;top:326.50px;width:0;height:29.64px;border-left:1px dotted #1e1e1e"></div>
<div class="a" style="left:797.0px;top:326.50px;width:1px;height:29.64px;background:#212121"></div>
<div class="a" style="left:844.0px;top:326.50px;width:0;height:29.64px;border-left:1px dotted #1e1e1e"></div>
<div class="a" style="left:892.0px;top:326.50px;width:1px;height:29.64px;background:#212121"></div>
<div class="a" style="left:939.0px;top:326.50px;width:0;height:29.64px;border-left:1px dotted #1e1e1e"></div>
<div class="a" style="left:987.0px;top:326.50px;width:1px;height:29.64px;background:#212121"></div>
<div class="a" style="left:1034.0px;top:326.50px;width:0;height:29.64px;border-left:1px dotted #1e1e1e"></div>
<div class="a" style="left:1082.0px;top:326.50px;width:1px;height:29.64px;background:#212121"></div>
<div class="a" style="left:1129.0px;top:326.50px;width:0;height:29.64px;border-left:1px dotted #1e1e1e"></div>
<div class="a" style="left:1177.0px;top:326.50px;width:1px;height:29.64px;background:#212121"></div>
<div class="a" style="left:1224.0px;top:326.50px;width:0;height:29.64px;border-left:1px dotted #1e1e1e"></div>
<div class="a" style="left:1272.0px;top:326.50px;width:1px;height:29.64px;background:#212121"></div>
<div class="a" style="left:1319.0px;top:326.50px;width:0;height:29.64px;border-left:1px dotted #1e1e1e"></div>
<div class="a" style="left:1367.0px;top:326.50px;width:1px;height:29.64px;background:#212121"></div>
<div class="a" style="left:1414.0px;top:326.50px;width:0;height:29.64px;border-left:1px dotted #1e1e1e"></div>
<div class="a" style="left:1462.0px;top:326.50px;width:1px;height:29.64px;background:#212121"></div>
<div class="a" style="left:1509.0px;top:326.50px;width:0;height:29.64px;border-left:1px dotted #1e1e1e"></div>
<div class="a" style="left:1557.0px;top:326.50px;width:1px;height:29.64px;background:#212121"></div>
<div class="a" style="left:1604.0px;top:326.50px;width:0;height:29.64px;border-left:1px dotted #1e1e1e"></div>
<div class="a" style="left:464.0px;top:356.14px;width:0;height:29.64px;border-left:1px dotted #1e1e1e"></div>
<div class="a" style="left:512.0px;top:356.14px;width:1px;height:29.64px;background:#212121"></div>
<div class="a" style="left:559.0px;top:356.14px;width:0;height:29.64px;border-left:1px dotted #1e1e1e"></div>
<div class="a" style="left:607.0px;top:356.14px;width:1px;height:29.64px;background:#212121"></div>
<div class="a" style="left:654.0px;top:356.14px;width:0;height:29.64px;border-left:1px dotted #1e1e1e"></div>
<div class="a" style="left:702.0px;top:356.14px;width:1px;height:29.64px;background:#212121"></div>
<div class="a" style="left:749.0px;top:356.14px;width:0;height:29.64px;border-left:1px dotted #1e1e1e"></div>
<div class="a" style="left:797.0px;top:356.14px;width:1px;height:29.64px;background:#212121"></div>
<div class="a" style="left:844.0px;top:356.14px;width:0;height:29.64px;border-left:1px dotted #1e1e1e"></div>
<div class="a" style="left:892.0px;top:356.14px;width:1px;height:29.64px;background:#212121"></div>
<div class="a" style="left:939.0px;top:356.14px;width:0;height:29.64px;border-left:1px dotted #1e1e1e"></div>
<div class="a" style="left:987.0px;top:356.14px;width:1px;height:29.64px;background:#212121"></div>
<div class="a" style="left:1034.0px;top:356.14px;width:0;height:29.64px;border-left:1px dotted #1e1e1e"></div>
<div class="a" style="left:1082.0px;top:356.14px;width:1px;height:29.64px;background:#212121"></div>
<div class="a" style="left:1129.0px;top:356.14px;width:0;height:29.64px;border-left:1px dotted #1e1e1e"></div>
<div class="a" style="left:1177.0px;top:356.14px;width:1px;height:29.64px;background:#212121"></div>
<div class="a" style="left:1224.0px;top:356.14px;width:0;height:29.64px;border-left:1px dotted #1e1e1e"></div>
<div class="a" style="left:1272.0px;top:356.14px;width:1px;height:29.64px;background:#212121"></div>
<div class="a" style="left:1319.0px;top:356.14px;width:0;height:29.64px;border-left:1px dotted #1e1e1e"></div>
<div class="a" style="left:1367.0px;top:356.14px;width:1px;height:29.64px;background:#212121"></div>
<div class="a" style="left:1414.0px;top:356.14px;width:0;height:29.64px;border-left:1px dotted #1e1e1e"></div>
<div class="a" style="left:1462.0px;top:356.14px;width:1px;height:29.64px;background:#212121"></div>
<div class="a" style="left:1509.0px;top:356.14px;width:0;height:29.64px;border-left:1px dotted #1e1e1e"></div>
<div class="a" style="left:1557.0px;top:356.14px;width:1px;height:29.64px;background:#212121"></div>
<div class="a" style="left:1604.0px;top:356.14px;width:0;height:29.64px;border-left:1px dotted #1e1e1e"></div>
<div class="a" style="left:464.0px;top:385.78px;width:0;height:29.64px;border-left:1px dotted #1e1e1e"></div>
<div class="a" style="left:512.0px;top:385.78px;width:1px;height:29.64px;background:#212121"></div>
<div class="a" style="left:559.0px;top:385.78px;width:0;height:29.64px;border-left:1px dotted #1e1e1e"></div>
<div class="a" style="left:607.0px;top:385.78px;width:1px;height:29.64px;background:#212121"></div>
<div class="a" style="left:654.0px;top:385.78px;width:0;height:29.64px;border-left:1px dotted #1e1e1e"></div>
<div class="a" style="left:702.0px;top:385.78px;width:1px;height:29.64px;background:#212121"></div>
<div class="a" style="left:749.0px;top:385.78px;width:0;height:29.64px;border-left:1px dotted #1e1e1e"></div>
<div class="a" style="left:797.0px;top:385.78px;width:1px;height:29.64px;background:#212121"></div>
<div class="a" style="left:844.0px;top:385.78px;width:0;height:29.64px;border-left:1px dotted #1e1e1e"></div>
<div class="a" style="left:892.0px;top:385.78px;width:1px;height:29.64px;background:#212121"></div>
<div class="a" style="left:939.0px;top:385.78px;width:0;height:29.64px;border-left:1px dotted #1e1e1e"></div>
<div class="a" style="left:987.0px;top:385.78px;width:1px;height:29.64px;background:#212121"></div>
<div class="a" style="left:1034.0px;top:385.78px;width:0;height:29.64px;border-left:1px dotted #1e1e1e"></div>
<div class="a" style="left:1082.0px;top:385.78px;width:1px;height:29.64px;background:#212121"></div>
<div class="a" style="left:1129.0px;top:385.78px;width:0;height:29.64px;border-left:1px dotted #1e1e1e"></div>
<div class="a" style="left:1177.0px;top:385.78px;width:1px;height:29.64px;background:#212121"></div>
<div class="a" style="left:1224.0px;top:385.78px;width:0;height:29.64px;border-left:1px dotted #1e1e1e"></div>
<div class="a" style="left:1272.0px;top:385.78px;width:1px;height:29.64px;background:#212121"></div>
<div class="a" style="left:1319.0px;top:385.78px;width:0;height:29.64px;border-left:1px dotted #1e1e1e"></div>
<div class="a" style="left:1367.0px;top:385.78px;width:1px;height:29.64px;background:#212121"></div>
<div class="a" style="left:1414.0px;top:385.78px;width:0;height:29.64px;border-left:1px dotted #1e1e1e"></div>
<div class="a" style="left:1462.0px;top:385.78px;width:1px;height:29.64px;background:#212121"></div>
<div class="a" style="left:1509.0px;top:385.78px;width:0;height:29.64px;border-left:1px dotted #1e1e1e"></div>
<div class="a" style="left:1557.0px;top:385.78px;width:1px;height:29.64px;background:#212121"></div>
<div class="a" style="left:1604.0px;top:385.78px;width:0;height:29.64px;border-left:1px dotted #1e1e1e"></div>
<div class="a" style="left:464.0px;top:415.42px;width:0;height:29.64px;border-left:1px dotted #1e1e1e"></div>
<div class="a" style="left:512.0px;top:415.42px;width:1px;height:29.64px;background:#212121"></div>
<div class="a" style="left:559.0px;top:415.42px;width:0;height:29.64px;border-left:1px dotted #1e1e1e"></div>
<div class="a" style="left:607.0px;top:415.42px;width:1px;height:29.64px;background:#212121"></div>
<div class="a" style="left:654.0px;top:415.42px;width:0;height:29.64px;border-left:1px dotted #1e1e1e"></div>
<div class="a" style="left:702.0px;top:415.42px;width:1px;height:29.64px;background:#212121"></div>
<div class="a" style="left:749.0px;top:415.42px;width:0;height:29.64px;border-left:1px dotted #1e1e1e"></div>
<div class="a" style="left:797.0px;top:415.42px;width:1px;height:29.64px;background:#212121"></div>
<div class="a" style="left:844.0px;top:415.42px;width:0;height:29.64px;border-left:1px dotted #1e1e1e"></div>
<div class="a" style="left:892.0px;top:415.42px;width:1px;height:29.64px;background:#212121"></div>
<div class="a" style="left:939.0px;top:415.42px;width:0;height:29.64px;border-left:1px dotted #1e1e1e"></div>
<div class="a" style="left:987.0px;top:415.42px;width:1px;height:29.64px;background:#212121"></div>
<div class="a" style="left:1034.0px;top:415.42px;width:0;height:29.64px;border-left:1px dotted #1e1e1e"></div>
<div class="a" style="left:1082.0px;top:415.42px;width:1px;height:29.64px;background:#212121"></div>
<div class="a" style="left:1129.0px;top:415.42px;width:0;height:29.64px;border-left:1px dotted #1e1e1e"></div>
<div class="a" style="left:1177.0px;top:415.42px;width:1px;height:29.64px;background:#212121"></div>
<div class="a" style="left:1224.0px;top:415.42px;width:0;height:29.64px;border-left:1px dotted #1e1e1e"></div>
<div class="a" style="left:1272.0px;top:415.42px;width:1px;height:29.64px;background:#212121"></div>
<div class="a" style="left:1319.0px;top:415.42px;width:0;height:29.64px;border-left:1px dotted #1e1e1e"></div>
<div class="a" style="left:1367.0px;top:415.42px;width:1px;height:29.64px;background:#212121"></div>
<div class="a" style="left:1414.0px;top:415.42px;width:0;height:29.64px;border-left:1px dotted #1e1e1e"></div>
<div class="a" style="left:1462.0px;top:415.42px;width:1px;height:29.64px;background:#212121"></div>
<div class="a" style="left:1509.0px;top:415.42px;width:0;height:29.64px;border-left:1px dotted #1e1e1e"></div>
<div class="a" style="left:1557.0px;top:415.42px;width:1px;height:29.64px;background:#212121"></div>
<div class="a" style="left:1604.0px;top:415.42px;width:0;height:29.64px;border-left:1px dotted #1e1e1e"></div>
<div class="a" style="left:464.0px;top:445.06px;width:0;height:29.64px;border-left:1px dotted #1e1e1e"></div>
<div class="a" style="left:512.0px;top:445.06px;width:1px;height:29.64px;background:#212121"></div>
<div class="a" style="left:559.0px;top:445.06px;width:0;height:29.64px;border-left:1px dotted #1e1e1e"></div>
<div class="a" style="left:607.0px;top:445.06px;width:1px;height:29.64px;background:#212121"></div>
<div class="a" style="left:654.0px;top:445.06px;width:0;height:29.64px;border-left:1px dotted #1e1e1e"></div>
<div class="a" style="left:702.0px;top:445.06px;width:1px;height:29.64px;background:#212121"></div>
<div class="a" style="left:749.0px;top:445.06px;width:0;height:29.64px;border-left:1px dotted #1e1e1e"></div>
<div class="a" style="left:797.0px;top:445.06px;width:1px;height:29.64px;background:#212121"></div>
<div class="a" style="left:844.0px;top:445.06px;width:0;height:29.64px;border-left:1px dotted #1e1e1e"></div>
<div class="a" style="left:892.0px;top:445.06px;width:1px;height:29.64px;background:#212121"></div>
<div class="a" style="left:939.0px;top:445.06px;width:0;height:29.64px;border-left:1px dotted #1e1e1e"></div>
<div class="a" style="left:987.0px;top:445.06px;width:1px;height:29.64px;background:#212121"></div>
<div class="a" style="left:1034.0px;top:445.06px;width:0;height:29.64px;border-left:1px dotted #1e1e1e"></div>
<div class="a" style="left:1082.0px;top:445.06px;width:1px;height:29.64px;background:#212121"></div>
<div class="a" style="left:1129.0px;top:445.06px;width:0;height:29.64px;border-left:1px dotted #1e1e1e"></div>
<div class="a" style="left:1177.0px;top:445.06px;width:1px;height:29.64px;background:#212121"></div>
<div class="a" style="left:1224.0px;top:445.06px;width:0;height:29.64px;border-left:1px dotted #1e1e1e"></div>
<div class="a" style="left:1272.0px;top:445.06px;width:1px;height:29.64px;background:#212121"></div>
<div class="a" style="left:1319.0px;top:445.06px;width:0;height:29.64px;border-left:1px dotted #1e1e1e"></div>
<div class="a" style="left:1367.0px;top:445.06px;width:1px;height:29.64px;background:#212121"></div>
<div class="a" style="left:1414.0px;top:445.06px;width:0;height:29.64px;border-left:1px dotted #1e1e1e"></div>
<div class="a" style="left:1462.0px;top:445.06px;width:1px;height:29.64px;background:#212121"></div>
<div class="a" style="left:1509.0px;top:445.06px;width:0;height:29.64px;border-left:1px dotted #1e1e1e"></div>
<div class="a" style="left:1557.0px;top:445.06px;width:1px;height:29.64px;background:#212121"></div>
<div class="a" style="left:1604.0px;top:445.06px;width:0;height:29.64px;border-left:1px dotted #1e1e1e"></div>
<div class="a" style="left:464.0px;top:474.70px;width:0;height:29.64px;border-left:1px dotted #1e1e1e"></div>
<div class="a" style="left:512.0px;top:474.70px;width:1px;height:29.64px;background:#212121"></div>
<div class="a" style="left:559.0px;top:474.70px;width:0;height:29.64px;border-left:1px dotted #1e1e1e"></div>
<div class="a" style="left:607.0px;top:474.70px;width:1px;height:29.64px;background:#212121"></div>
<div class="a" style="left:654.0px;top:474.70px;width:0;height:29.64px;border-left:1px dotted #1e1e1e"></div>
<div class="a" style="left:702.0px;top:474.70px;width:1px;height:29.64px;background:#212121"></div>
<div class="a" style="left:749.0px;top:474.70px;width:0;height:29.64px;border-left:1px dotted #1e1e1e"></div>
<div class="a" style="left:797.0px;top:474.70px;width:1px;height:29.64px;background:#212121"></div>
<div class="a" style="left:844.0px;top:474.70px;width:0;height:29.64px;border-left:1px dotted #1e1e1e"></div>
<div class="a" style="left:892.0px;top:474.70px;width:1px;height:29.64px;background:#212121"></div>
<div class="a" style="left:939.0px;top:474.70px;width:0;height:29.64px;border-left:1px dotted #1e1e1e"></div>
<div class="a" style="left:987.0px;top:474.70px;width:1px;height:29.64px;background:#212121"></div>
<div class="a" style="left:1034.0px;top:474.70px;width:0;height:29.64px;border-left:1px dotted #1e1e1e"></div>
<div class="a" style="left:1082.0px;top:474.70px;width:1px;height:29.64px;background:#212121"></div>
<div class="a" style="left:1129.0px;top:474.70px;width:0;height:29.64px;border-left:1px dotted #1e1e1e"></div>
<div class="a" style="left:1177.0px;top:474.70px;width:1px;height:29.64px;background:#212121"></div>
<div class="a" style="left:1224.0px;top:474.70px;width:0;height:29.64px;border-left:1px dotted #1e1e1e"></div>
<div class="a" style="left:1272.0px;top:474.70px;width:1px;height:29.64px;background:#212121"></div>
<div class="a" style="left:1319.0px;top:474.70px;width:0;height:29.64px;border-left:1px dotted #1e1e1e"></div>
<div class="a" style="left:1367.0px;top:474.70px;width:1px;height:29.64px;background:#212121"></div>
<div class="a" style="left:1414.0px;top:474.70px;width:0;height:29.64px;border-left:1px dotted #1e1e1e"></div>
<div class="a" style="left:1462.0px;top:474.70px;width:1px;height:29.64px;background:#212121"></div>
<div class="a" style="left:1509.0px;top:474.70px;width:0;height:29.64px;border-left:1px dotted #1e1e1e"></div>
<div class="a" style="left:1557.0px;top:474.70px;width:1px;height:29.64px;background:#212121"></div>
<div class="a" style="left:1604.0px;top:474.70px;width:0;height:29.64px;border-left:1px dotted #1e1e1e"></div>
<div class="a" style="left:464.0px;top:533.98px;width:0;height:29.64px;border-left:1px dotted #1e1e1e"></div>
<div class="a" style="left:512.0px;top:533.98px;width:1px;height:29.64px;background:#212121"></div>
<div class="a" style="left:559.0px;top:533.98px;width:0;height:29.64px;border-left:1px dotted #1e1e1e"></div>
<div class="a" style="left:607.0px;top:533.98px;width:1px;height:29.64px;background:#212121"></div>
<div class="a" style="left:654.0px;top:533.98px;width:0;height:29.64px;border-left:1px dotted #1e1e1e"></div>
<div class="a" style="left:702.0px;top:533.98px;width:1px;height:29.64px;background:#212121"></div>
<div class="a" style="left:749.0px;top:533.98px;width:0;height:29.64px;border-left:1px dotted #1e1e1e"></div>
<div class="a" style="left:797.0px;top:533.98px;width:1px;height:29.64px;background:#212121"></div>
<div class="a" style="left:844.0px;top:533.98px;width:0;height:29.64px;border-left:1px dotted #1e1e1e"></div>
<div class="a" style="left:892.0px;top:533.98px;width:1px;height:29.64px;background:#212121"></div>
<div class="a" style="left:939.0px;top:533.98px;width:0;height:29.64px;border-left:1px dotted #1e1e1e"></div>
<div class="a" style="left:987.0px;top:533.98px;width:1px;height:29.64px;background:#212121"></div>
<div class="a" style="left:1034.0px;top:533.98px;width:0;height:29.64px;border-left:1px dotted #1e1e1e"></div>
<div class="a" style="left:1082.0px;top:533.98px;width:1px;height:29.64px;background:#212121"></div>
<div class="a" style="left:1129.0px;top:533.98px;width:0;height:29.64px;border-left:1px dotted #1e1e1e"></div>
<div class="a" style="left:1177.0px;top:533.98px;width:1px;height:29.64px;background:#212121"></div>
<div class="a" style="left:1224.0px;top:533.98px;width:0;height:29.64px;border-left:1px dotted #1e1e1e"></div>
<div class="a" style="left:1272.0px;top:533.98px;width:1px;height:29.64px;background:#212121"></div>
<div class="a" style="left:1319.0px;top:533.98px;width:0;height:29.64px;border-left:1px dotted #1e1e1e"></div>
<div class="a" style="left:1367.0px;top:533.98px;width:1px;height:29.64px;background:#212121"></div>
<div class="a" style="left:1414.0px;top:533.98px;width:0;height:29.64px;border-left:1px dotted #1e1e1e"></div>
<div class="a" style="left:1462.0px;top:533.98px;width:1px;height:29.64px;background:#212121"></div>
<div class="a" style="left:1509.0px;top:533.98px;width:0;height:29.64px;border-left:1px dotted #1e1e1e"></div>
<div class="a" style="left:1557.0px;top:533.98px;width:1px;height:29.64px;background:#212121"></div>
<div class="a" style="left:1604.0px;top:533.98px;width:0;height:29.64px;border-left:1px dotted #1e1e1e"></div>
<div class="a" style="left:464.0px;top:563.62px;width:0;height:29.64px;border-left:1px dotted #1e1e1e"></div>
<div class="a" style="left:512.0px;top:563.62px;width:1px;height:29.64px;background:#212121"></div>
<div class="a" style="left:559.0px;top:563.62px;width:0;height:29.64px;border-left:1px dotted #1e1e1e"></div>
<div class="a" style="left:607.0px;top:563.62px;width:1px;height:29.64px;background:#212121"></div>
<div class="a" style="left:654.0px;top:563.62px;width:0;height:29.64px;border-left:1px dotted #1e1e1e"></div>
<div class="a" style="left:702.0px;top:563.62px;width:1px;height:29.64px;background:#212121"></div>
<div class="a" style="left:749.0px;top:563.62px;width:0;height:29.64px;border-left:1px dotted #1e1e1e"></div>
<div class="a" style="left:797.0px;top:563.62px;width:1px;height:29.64px;background:#212121"></div>
<div class="a" style="left:844.0px;top:563.62px;width:0;height:29.64px;border-left:1px dotted #1e1e1e"></div>
<div class="a" style="left:892.0px;top:563.62px;width:1px;height:29.64px;background:#212121"></div>
<div class="a" style="left:939.0px;top:563.62px;width:0;height:29.64px;border-left:1px dotted #1e1e1e"></div>
<div class="a" style="left:987.0px;top:563.62px;width:1px;height:29.64px;background:#212121"></div>
<div class="a" style="left:1034.0px;top:563.62px;width:0;height:29.64px;border-left:1px dotted #1e1e1e"></div>
<div class="a" style="left:1082.0px;top:563.62px;width:1px;height:29.64px;background:#212121"></div>
<div class="a" style="left:1129.0px;top:563.62px;width:0;height:29.64px;border-left:1px dotted #1e1e1e"></div>
<div class="a" style="left:1177.0px;top:563.62px;width:1px;height:29.64px;background:#212121"></div>
<div class="a" style="left:1224.0px;top:563.62px;width:0;height:29.64px;border-left:1px dotted #1e1e1e"></div>
<div class="a" style="left:1272.0px;top:563.62px;width:1px;height:29.64px;background:#212121"></div>
<div class="a" style="left:1319.0px;top:563.62px;width:0;height:29.64px;border-left:1px dotted #1e1e1e"></div>
<div class="a" style="left:1367.0px;top:563.62px;width:1px;height:29.64px;background:#212121"></div>
<div class="a" style="left:1414.0px;top:563.62px;width:0;height:29.64px;border-left:1px dotted #1e1e1e"></div>
<div class="a" style="left:1462.0px;top:563.62px;width:1px;height:29.64px;background:#212121"></div>
<div class="a" style="left:1509.0px;top:563.62px;width:0;height:29.64px;border-left:1px dotted #1e1e1e"></div>
<div class="a" style="left:1557.0px;top:563.62px;width:1px;height:29.64px;background:#212121"></div>
<div class="a" style="left:1604.0px;top:563.62px;width:0;height:29.64px;border-left:1px dotted #1e1e1e"></div>
<div class="a" style="left:464.0px;top:593.26px;width:0;height:29.64px;border-left:1px dotted #1e1e1e"></div>
<div class="a" style="left:512.0px;top:593.26px;width:1px;height:29.64px;background:#212121"></div>
<div class="a" style="left:559.0px;top:593.26px;width:0;height:29.64px;border-left:1px dotted #1e1e1e"></div>
<div class="a" style="left:607.0px;top:593.26px;width:1px;height:29.64px;background:#212121"></div>
<div class="a" style="left:654.0px;top:593.26px;width:0;height:29.64px;border-left:1px dotted #1e1e1e"></div>
<div class="a" style="left:702.0px;top:593.26px;width:1px;height:29.64px;background:#212121"></div>
<div class="a" style="left:749.0px;top:593.26px;width:0;height:29.64px;border-left:1px dotted #1e1e1e"></div>
<div class="a" style="left:797.0px;top:593.26px;width:1px;height:29.64px;background:#212121"></div>
<div class="a" style="left:844.0px;top:593.26px;width:0;height:29.64px;border-left:1px dotted #1e1e1e"></div>
<div class="a" style="left:892.0px;top:593.26px;width:1px;height:29.64px;background:#212121"></div>
<div class="a" style="left:939.0px;top:593.26px;width:0;height:29.64px;border-left:1px dotted #1e1e1e"></div>
<div class="a" style="left:987.0px;top:593.26px;width:1px;height:29.64px;background:#212121"></div>
<div class="a" style="left:1034.0px;top:593.26px;width:0;height:29.64px;border-left:1px dotted #1e1e1e"></div>
<div class="a" style="left:1082.0px;top:593.26px;width:1px;height:29.64px;background:#212121"></div>
<div class="a" style="left:1129.0px;top:593.26px;width:0;height:29.64px;border-left:1px dotted #1e1e1e"></div>
<div class="a" style="left:1177.0px;top:593.26px;width:1px;height:29.64px;background:#212121"></div>
<div class="a" style="left:1224.0px;top:593.26px;width:0;height:29.64px;border-left:1px dotted #1e1e1e"></div>
<div class="a" style="left:1272.0px;top:593.26px;width:1px;height:29.64px;background:#212121"></div>
<div class="a" style="left:1319.0px;top:593.26px;width:0;height:29.64px;border-left:1px dotted #1e1e1e"></div>
<div class="a" style="left:1367.0px;top:593.26px;width:1px;height:29.64px;background:#212121"></div>
<div class="a" style="left:1414.0px;top:593.26px;width:0;height:29.64px;border-left:1px dotted #1e1e1e"></div>
<div class="a" style="left:1462.0px;top:593.26px;width:1px;height:29.64px;background:#212121"></div>
<div class="a" style="left:1509.0px;top:593.26px;width:0;height:29.64px;border-left:1px dotted #1e1e1e"></div>
<div class="a" style="left:1557.0px;top:593.26px;width:1px;height:29.64px;background:#212121"></div>
<div class="a" style="left:1604.0px;top:593.26px;width:0;height:29.64px;border-left:1px dotted #1e1e1e"></div>
<div class="a" style="left:464.0px;top:622.90px;width:0;height:29.64px;border-left:1px dotted #1e1e1e"></div>
<div class="a" style="left:512.0px;top:622.90px;width:1px;height:29.64px;background:#212121"></div>
<div class="a" style="left:559.0px;top:622.90px;width:0;height:29.64px;border-left:1px dotted #1e1e1e"></div>
<div class="a" style="left:607.0px;top:622.90px;width:1px;height:29.64px;background:#212121"></div>
<div class="a" style="left:654.0px;top:622.90px;width:0;height:29.64px;border-left:1px dotted #1e1e1e"></div>
<div class="a" style="left:702.0px;top:622.90px;width:1px;height:29.64px;background:#212121"></div>
<div class="a" style="left:749.0px;top:622.90px;width:0;height:29.64px;border-left:1px dotted #1e1e1e"></div>
<div class="a" style="left:797.0px;top:622.90px;width:1px;height:29.64px;background:#212121"></div>
<div class="a" style="left:844.0px;top:622.90px;width:0;height:29.64px;border-left:1px dotted #1e1e1e"></div>
<div class="a" style="left:892.0px;top:622.90px;width:1px;height:29.64px;background:#212121"></div>
<div class="a" style="left:939.0px;top:622.90px;width:0;height:29.64px;border-left:1px dotted #1e1e1e"></div>
<div class="a" style="left:987.0px;top:622.90px;width:1px;height:29.64px;background:#212121"></div>
<div class="a" style="left:1034.0px;top:622.90px;width:0;height:29.64px;border-left:1px dotted #1e1e1e"></div>
<div class="a" style="left:1082.0px;top:622.90px;width:1px;height:29.64px;background:#212121"></div>
<div class="a" style="left:1129.0px;top:622.90px;width:0;height:29.64px;border-left:1px dotted #1e1e1e"></div>
<div class="a" style="left:1177.0px;top:622.90px;width:1px;height:29.64px;background:#212121"></div>
<div class="a" style="left:1224.0px;top:622.90px;width:0;height:29.64px;border-left:1px dotted #1e1e1e"></div>
<div class="a" style="left:1272.0px;top:622.90px;width:1px;height:29.64px;background:#212121"></div>
<div class="a" style="left:1319.0px;top:622.90px;width:0;height:29.64px;border-left:1px dotted #1e1e1e"></div>
<div class="a" style="left:1367.0px;top:622.90px;width:1px;height:29.64px;background:#212121"></div>
<div class="a" style="left:1414.0px;top:622.90px;width:0;height:29.64px;border-left:1px dotted #1e1e1e"></div>
<div class="a" style="left:1462.0px;top:622.90px;width:1px;height:29.64px;background:#212121"></div>
<div class="a" style="left:1509.0px;top:622.90px;width:0;height:29.64px;border-left:1px dotted #1e1e1e"></div>
<div class="a" style="left:1557.0px;top:622.90px;width:1px;height:29.64px;background:#212121"></div>
<div class="a" style="left:1604.0px;top:622.90px;width:0;height:29.64px;border-left:1px dotted #1e1e1e"></div>
<div class="a" style="left:464.0px;top:652.54px;width:0;height:29.64px;border-left:1px dotted #1e1e1e"></div>
<div class="a" style="left:512.0px;top:652.54px;width:1px;height:29.64px;background:#212121"></div>
<div class="a" style="left:559.0px;top:652.54px;width:0;height:29.64px;border-left:1px dotted #1e1e1e"></div>
<div class="a" style="left:607.0px;top:652.54px;width:1px;height:29.64px;background:#212121"></div>
<div class="a" style="left:654.0px;top:652.54px;width:0;height:29.64px;border-left:1px dotted #1e1e1e"></div>
<div class="a" style="left:702.0px;top:652.54px;width:1px;height:29.64px;background:#212121"></div>
<div class="a" style="left:749.0px;top:652.54px;width:0;height:29.64px;border-left:1px dotted #1e1e1e"></div>
<div class="a" style="left:797.0px;top:652.54px;width:1px;height:29.64px;background:#212121"></div>
<div class="a" style="left:844.0px;top:652.54px;width:0;height:29.64px;border-left:1px dotted #1e1e1e"></div>
<div class="a" style="left:892.0px;top:652.54px;width:1px;height:29.64px;background:#212121"></div>
<div class="a" style="left:939.0px;top:652.54px;width:0;height:29.64px;border-left:1px dotted #1e1e1e"></div>
<div class="a" style="left:987.0px;top:652.54px;width:1px;height:29.64px;background:#212121"></div>
<div class="a" style="left:1034.0px;top:652.54px;width:0;height:29.64px;border-left:1px dotted #1e1e1e"></div>
<div class="a" style="left:1082.0px;top:652.54px;width:1px;height:29.64px;background:#212121"></div>
<div class="a" style="left:1129.0px;top:652.54px;width:0;height:29.64px;border-left:1px dotted #1e1e1e"></div>
<div class="a" style="left:1177.0px;top:652.54px;width:1px;height:29.64px;background:#212121"></div>
<div class="a" style="left:1224.0px;top:652.54px;width:0;height:29.64px;border-left:1px dotted #1e1e1e"></div>
<div class="a" style="left:1272.0px;top:652.54px;width:1px;height:29.64px;background:#212121"></div>
<div class="a" style="left:1319.0px;top:652.54px;width:0;height:29.64px;border-left:1px dotted #1e1e1e"></div>
<div class="a" style="left:1367.0px;top:652.54px;width:1px;height:29.64px;background:#212121"></div>
<div class="a" style="left:1414.0px;top:652.54px;width:0;height:29.64px;border-left:1px dotted #1e1e1e"></div>
<div class="a" style="left:1462.0px;top:652.54px;width:1px;height:29.64px;background:#212121"></div>
<div class="a" style="left:1509.0px;top:652.54px;width:0;height:29.64px;border-left:1px dotted #1e1e1e"></div>
<div class="a" style="left:1557.0px;top:652.54px;width:1px;height:29.64px;background:#212121"></div>
<div class="a" style="left:1604.0px;top:652.54px;width:0;height:29.64px;border-left:1px dotted #1e1e1e"></div>
<div class="a" style="left:464.0px;top:682.18px;width:0;height:29.64px;border-left:1px dotted #1e1e1e"></div>
<div class="a" style="left:512.0px;top:682.18px;width:1px;height:29.64px;background:#212121"></div>
<div class="a" style="left:559.0px;top:682.18px;width:0;height:29.64px;border-left:1px dotted #1e1e1e"></div>
<div class="a" style="left:607.0px;top:682.18px;width:1px;height:29.64px;background:#212121"></div>
<div class="a" style="left:654.0px;top:682.18px;width:0;height:29.64px;border-left:1px dotted #1e1e1e"></div>
<div class="a" style="left:702.0px;top:682.18px;width:1px;height:29.64px;background:#212121"></div>
<div class="a" style="left:749.0px;top:682.18px;width:0;height:29.64px;border-left:1px dotted #1e1e1e"></div>
<div class="a" style="left:797.0px;top:682.18px;width:1px;height:29.64px;background:#212121"></div>
<div class="a" style="left:844.0px;top:682.18px;width:0;height:29.64px;border-left:1px dotted #1e1e1e"></div>
<div class="a" style="left:892.0px;top:682.18px;width:1px;height:29.64px;background:#212121"></div>
<div class="a" style="left:939.0px;top:682.18px;width:0;height:29.64px;border-left:1px dotted #1e1e1e"></div>
<div class="a" style="left:987.0px;top:682.18px;width:1px;height:29.64px;background:#212121"></div>
<div class="a" style="left:1034.0px;top:682.18px;width:0;height:29.64px;border-left:1px dotted #1e1e1e"></div>
<div class="a" style="left:1082.0px;top:682.18px;width:1px;height:29.64px;background:#212121"></div>
<div class="a" style="left:1129.0px;top:682.18px;width:0;height:29.64px;border-left:1px dotted #1e1e1e"></div>
<div class="a" style="left:1177.0px;top:682.18px;width:1px;height:29.64px;background:#212121"></div>
<div class="a" style="left:1224.0px;top:682.18px;width:0;height:29.64px;border-left:1px dotted #1e1e1e"></div>
<div class="a" style="left:1272.0px;top:682.18px;width:1px;height:29.64px;background:#212121"></div>
<div class="a" style="left:1319.0px;top:682.18px;width:0;height:29.64px;border-left:1px dotted #1e1e1e"></div>
<div class="a" style="left:1367.0px;top:682.18px;width:1px;height:29.64px;background:#212121"></div>
<div class="a" style="left:1414.0px;top:682.18px;width:0;height:29.64px;border-left:1px dotted #1e1e1e"></div>
<div class="a" style="left:1462.0px;top:682.18px;width:1px;height:29.64px;background:#212121"></div>
<div class="a" style="left:1509.0px;top:682.18px;width:0;height:29.64px;border-left:1px dotted #1e1e1e"></div>
<div class="a" style="left:1557.0px;top:682.18px;width:1px;height:29.64px;background:#212121"></div>
<div class="a" style="left:1604.0px;top:682.18px;width:0;height:29.64px;border-left:1px dotted #1e1e1e"></div>
<div class="a" style="left:464.0px;top:711.82px;width:0;height:29.64px;border-left:1px dotted #1e1e1e"></div>
<div class="a" style="left:512.0px;top:711.82px;width:1px;height:29.64px;background:#212121"></div>
<div class="a" style="left:559.0px;top:711.82px;width:0;height:29.64px;border-left:1px dotted #1e1e1e"></div>
<div class="a" style="left:607.0px;top:711.82px;width:1px;height:29.64px;background:#212121"></div>
<div class="a" style="left:654.0px;top:711.82px;width:0;height:29.64px;border-left:1px dotted #1e1e1e"></div>
<div class="a" style="left:702.0px;top:711.82px;width:1px;height:29.64px;background:#212121"></div>
<div class="a" style="left:749.0px;top:711.82px;width:0;height:29.64px;border-left:1px dotted #1e1e1e"></div>
<div class="a" style="left:797.0px;top:711.82px;width:1px;height:29.64px;background:#212121"></div>
<div class="a" style="left:844.0px;top:711.82px;width:0;height:29.64px;border-left:1px dotted #1e1e1e"></div>
<div class="a" style="left:892.0px;top:711.82px;width:1px;height:29.64px;background:#212121"></div>
<div class="a" style="left:939.0px;top:711.82px;width:0;height:29.64px;border-left:1px dotted #1e1e1e"></div>
<div class="a" style="left:987.0px;top:711.82px;width:1px;height:29.64px;background:#212121"></div>
<div class="a" style="left:1034.0px;top:711.82px;width:0;height:29.64px;border-left:1px dotted #1e1e1e"></div>
<div class="a" style="left:1082.0px;top:711.82px;width:1px;height:29.64px;background:#212121"></div>
<div class="a" style="left:1129.0px;top:711.82px;width:0;height:29.64px;border-left:1px dotted #1e1e1e"></div>
<div class="a" style="left:1177.0px;top:711.82px;width:1px;height:29.64px;background:#212121"></div>
<div class="a" style="left:1224.0px;top:711.82px;width:0;height:29.64px;border-left:1px dotted #1e1e1e"></div>
<div class="a" style="left:1272.0px;top:711.82px;width:1px;height:29.64px;background:#212121"></div>
<div class="a" style="left:1319.0px;top:711.82px;width:0;height:29.64px;border-left:1px dotted #1e1e1e"></div>
<div class="a" style="left:1367.0px;top:711.82px;width:1px;height:29.64px;background:#212121"></div>
<div class="a" style="left:1414.0px;top:711.82px;width:0;height:29.64px;border-left:1px dotted #1e1e1e"></div>
<div class="a" style="left:1462.0px;top:711.82px;width:1px;height:29.64px;background:#212121"></div>
<div class="a" style="left:1509.0px;top:711.82px;width:0;height:29.64px;border-left:1px dotted #1e1e1e"></div>
<div class="a" style="left:1557.0px;top:711.82px;width:1px;height:29.64px;background:#212121"></div>
<div class="a" style="left:1604.0px;top:711.82px;width:0;height:29.64px;border-left:1px dotted #1e1e1e"></div>
<div class="a" style="left:464.0px;top:741.46px;width:0;height:29.64px;border-left:1px dotted #1e1e1e"></div>
<div class="a" style="left:512.0px;top:741.46px;width:1px;height:29.64px;background:#212121"></div>
<div class="a" style="left:559.0px;top:741.46px;width:0;height:29.64px;border-left:1px dotted #1e1e1e"></div>
<div class="a" style="left:607.0px;top:741.46px;width:1px;height:29.64px;background:#212121"></div>
<div class="a" style="left:654.0px;top:741.46px;width:0;height:29.64px;border-left:1px dotted #1e1e1e"></div>
<div class="a" style="left:702.0px;top:741.46px;width:1px;height:29.64px;background:#212121"></div>
<div class="a" style="left:749.0px;top:741.46px;width:0;height:29.64px;border-left:1px dotted #1e1e1e"></div>
<div class="a" style="left:797.0px;top:741.46px;width:1px;height:29.64px;background:#212121"></div>
<div class="a" style="left:844.0px;top:741.46px;width:0;height:29.64px;border-left:1px dotted #1e1e1e"></div>
<div class="a" style="left:892.0px;top:741.46px;width:1px;height:29.64px;background:#212121"></div>
<div class="a" style="left:939.0px;top:741.46px;width:0;height:29.64px;border-left:1px dotted #1e1e1e"></div>
<div class="a" style="left:987.0px;top:741.46px;width:1px;height:29.64px;background:#212121"></div>
<div class="a" style="left:1034.0px;top:741.46px;width:0;height:29.64px;border-left:1px dotted #1e1e1e"></div>
<div class="a" style="left:1082.0px;top:741.46px;width:1px;height:29.64px;background:#212121"></div>
<div class="a" style="left:1129.0px;top:741.46px;width:0;height:29.64px;border-left:1px dotted #1e1e1e"></div>
<div class="a" style="left:1177.0px;top:741.46px;width:1px;height:29.64px;background:#212121"></div>
<div class="a" style="left:1224.0px;top:741.46px;width:0;height:29.64px;border-left:1px dotted #1e1e1e"></div>
<div class="a" style="left:1272.0px;top:741.46px;width:1px;height:29.64px;background:#212121"></div>
<div class="a" style="left:1319.0px;top:741.46px;width:0;height:29.64px;border-left:1px dotted #1e1e1e"></div>
<div class="a" style="left:1367.0px;top:741.46px;width:1px;height:29.64px;background:#212121"></div>
<div class="a" style="left:1414.0px;top:741.46px;width:0;height:29.64px;border-left:1px dotted #1e1e1e"></div>
<div class="a" style="left:1462.0px;top:741.46px;width:1px;height:29.64px;background:#212121"></div>
<div class="a" style="left:1509.0px;top:741.46px;width:0;height:29.64px;border-left:1px dotted #1e1e1e"></div>
<div class="a" style="left:1557.0px;top:741.46px;width:1px;height:29.64px;background:#212121"></div>
<div class="a" style="left:1604.0px;top:741.46px;width:0;height:29.64px;border-left:1px dotted #1e1e1e"></div>
<div class="a" style="left:464.0px;top:771.10px;width:0;height:13.30px;border-left:1px dotted #1e1e1e"></div>
<div class="a" style="left:512.0px;top:771.10px;width:1px;height:13.30px;background:#212121"></div>
<div class="a" style="left:559.0px;top:771.10px;width:0;height:13.30px;border-left:1px dotted #1e1e1e"></div>
<div class="a" style="left:607.0px;top:771.10px;width:1px;height:13.30px;background:#212121"></div>
<div class="a" style="left:654.0px;top:771.10px;width:0;height:13.30px;border-left:1px dotted #1e1e1e"></div>
<div class="a" style="left:702.0px;top:771.10px;width:1px;height:13.30px;background:#212121"></div>
<div class="a" style="left:749.0px;top:771.10px;width:0;height:13.30px;border-left:1px dotted #1e1e1e"></div>
<div class="a" style="left:797.0px;top:771.10px;width:1px;height:13.30px;background:#212121"></div>
<div class="a" style="left:844.0px;top:771.10px;width:0;height:13.30px;border-left:1px dotted #1e1e1e"></div>
<div class="a" style="left:892.0px;top:771.10px;width:1px;height:13.30px;background:#212121"></div>
<div class="a" style="left:939.0px;top:771.10px;width:0;height:13.30px;border-left:1px dotted #1e1e1e"></div>
<div class="a" style="left:987.0px;top:771.10px;width:1px;height:13.30px;background:#212121"></div>
<div class="a" style="left:1034.0px;top:771.10px;width:0;height:13.30px;border-left:1px dotted #1e1e1e"></div>
<div class="a" style="left:1082.0px;top:771.10px;width:1px;height:13.30px;background:#212121"></div>
<div class="a" style="left:1129.0px;top:771.10px;width:0;height:13.30px;border-left:1px dotted #1e1e1e"></div>
<div class="a" style="left:1177.0px;top:771.10px;width:1px;height:13.30px;background:#212121"></div>
<div class="a" style="left:1224.0px;top:771.10px;width:0;height:13.30px;border-left:1px dotted #1e1e1e"></div>
<div class="a" style="left:1272.0px;top:771.10px;width:1px;height:13.30px;background:#212121"></div>
<div class="a" style="left:1319.0px;top:771.10px;width:0;height:13.30px;border-left:1px dotted #1e1e1e"></div>
<div class="a" style="left:1367.0px;top:771.10px;width:1px;height:13.30px;background:#212121"></div>
<div class="a" style="left:1414.0px;top:771.10px;width:0;height:13.30px;border-left:1px dotted #1e1e1e"></div>
<div class="a" style="left:1462.0px;top:771.10px;width:1px;height:13.30px;background:#212121"></div>
<div class="a" style="left:1509.0px;top:771.10px;width:0;height:13.30px;border-left:1px dotted #1e1e1e"></div>
<div class="a" style="left:1557.0px;top:771.10px;width:1px;height:13.30px;background:#212121"></div>
<div class="a" style="left:1604.0px;top:771.10px;width:0;height:13.30px;border-left:1px dotted #1e1e1e"></div>
<div class="a" style="left:431.7px;top:148.66px;width:1px;height:635.74px;background:#2a0e0e"></div>
<svg class="a" style="left:428px;top:110.5px" width="8" height="6" viewBox="0 0 8 6"><path d="M0 0h8L4 5.5z" fill="#3a0808"/></svg>
<div class="a" style="left:859px;top:785px;width:608px;height:6px;border-radius:3px;background:#0b0b0b"></div>
<div class="a" style="left:1595px;top:149px;width:3.5px;height:262px;border-radius:2px;background:#101010"></div>
<div class="a" style="left:1598.5px;top:149px;width:1.5px;height:639px;background:#383838"></div>
<div class="a" style="left:341px;top:220.2px;width:917.9px;height:348.6px;border-radius:15px;background:#afafaf;box-shadow:0 0 0 1.4px #000,0 6px 16px 3px rgba(0,0,0,0.6)"></div>
<div class="a" style="left:358.00px;top:237.13px;font-size:13px;color:#121212;font-weight:bold;transform:scaleX(0.9651);transform-origin:0 0;">Thêm mới đặt bàn</div>
<svg class="a" style="left:1237.6px;top:234.2px" width="10" height="10" viewBox="0 0 10 10"><path d="M0.6 0.6l8.8 8.8M9.4 0.6l-8.8 8.8" stroke="#161616" stroke-width="1.2"/></svg>
<div class="a" style="left:358.00px;top:278.61px;font-size:11px;color:#111111;-webkit-text-stroke:0.55px #111111;transform:scaleX(0.9558);transform-origin:0 0;">Tên khách hàng</div>
<div class="a" style="left:438.50px;top:278.61px;font-size:11px;color:#8c0a0a;font-weight:bold;">*</div>
<div class="a" style="left:472.5px;top:270.2px;width:305.5px;height:30px;border-radius:15px;background:#a2a2a2"></div>
<svg class="a" style="left:481.8px;top:279px" width="12" height="12" viewBox="0 0 12 12"><circle cx="6" cy="6" r="5.3" stroke="#161616" stroke-width="1.2" fill="none"/><circle cx="6" cy="4.7" r="1.9" stroke="#161616" stroke-width="1.1" fill="none"/><path d="M2.7 9.7c1-1.3 2-1.8 3.3-1.8s2.3.5 3.3 1.8" stroke="#161616" stroke-width="1.1" fill="none"/></svg>
<div class="a" style="left:499.50px;top:279.61px;font-size:11px;color:#062f98;-webkit-text-stroke:0.3px #062f98;transform:scaleX(0.9397);transform-origin:0 0;">Minh Anh 0962…</div>
<div class="a" style="left:650.00px;top:279.61px;font-size:11px;color:#222222;-webkit-text-stroke:0.3px #222222;transform:scaleX(0.9170);transform-origin:0 0;">Điểm 3 · <span style="color:#8a0c14;-webkit-text-stroke-color:#8a0c14">Nợ: 201,026</span></div>
<svg class="a" style="left:756.7px;top:279px" width="12" height="12" viewBox="0 0 12 12"><circle cx="6" cy="6" r="5.2" stroke="#161616" stroke-width="1.2" fill="none"/><path d="M4 4l4 4M8 4l-4 4" stroke="#161616" stroke-width="1.3"/></svg>
<div class="a" style="left:358.00px;top:316.81px;font-size:11px;color:#111111;-webkit-text-stroke:0.55px #111111;transform:scaleX(0.9810);transform-origin:0 0;">Số điện thoại</div>
<div class="a" style="left:421.50px;top:316.81px;font-size:11px;color:#8c0a0a;font-weight:bold;">*</div>
<div class="a" style="left:472.50px;top:317.11px;font-size:11px;color:#0d0d0d;-webkit-text-stroke:0.3px #0d0d0d;transform:scaleX(0.9888);transform-origin:0 0;">0962626216</div>
<div class="a" style="left:472px;top:334px;width:306px;height:1px;background:#9a9a9a"></div>
<div class="a" style="left:358.00px;top:351.61px;font-size:11px;color:#111111;-webkit-text-stroke:0.55px #111111;transform:scaleX(0.9388);transform-origin:0 0;">Giờ đến</div>
<div class="a" style="left:472.50px;top:351.11px;font-size:11px;color:#0d0d0d;-webkit-text-stroke:0.3px #0d0d0d;transform:scaleX(1.0379);transform-origin:0 0;">25/11/2025 11:00</div>
<svg class="a" style="left:739.3px;top:350px" width="11" height="12" viewBox="0 0 11 12"><rect x="0.8" y="2" width="9.4" height="9.2" rx="1" stroke="#161616" stroke-width="1.4" fill="none"/><rect x="0.8" y="2" width="9.4" height="2.6" fill="#161616"/><rect x="2.5" y="0.3" width="1.3" height="2" fill="#161616"/><rect x="7.2" y="0.3" width="1.3" height="2" fill="#161616"/></svg>
<svg class="a" style="left:760.8px;top:349.5px" width="12" height="12" viewBox="0 0 12 12"><circle cx="6" cy="6" r="5.1" stroke="#161616" stroke-width="1.2" fill="none"/><path d="M6 3v3.2l2.2 1.4" stroke="#161616" stroke-width="1.2" fill="none"/></svg>
<div class="a" style="left:349.7px;top:369.2px;width:443px;height:47.6px;background:#ffffff;border-radius:1px"></div>
<div class="a" style="left:358.00px;top:386.61px;font-size:11px;color:#161616;-webkit-text-stroke:0.4px #161616;">Tiền đặt cọc</div>
<div class="a" style="left:571.00px;top:387.61px;font-size:11px;color:#1a1a1a;-webkit-text-stroke:0.3px #1a1a1a;transform:scaleX(0.9556);transform-origin:0 0;">200,000</div>
<div class="a" style="left:472px;top:404px;width:137px;height:1px;background:#dedede"></div>
<div class="a" style="left:695.00px;top:386.11px;font-size:11px;color:#303030;-webkit-text-stroke:0.3px #303030;transform:scaleX(0.8900);transform-origin:0 0;">Chuyển kh…</div>
<svg class="a" style="left:762.3px;top:384.5px" width="10" height="7" viewBox="0 0 10 7"><path d="M1 1l4 4 4-4" stroke="#303030" stroke-width="1.3" fill="none"/></svg>
<div class="a" style="left:695px;top:404px;width:83px;height:1px;background:#dedede"></div>
<div class="a" style="left:358.00px;top:421.61px;font-size:11px;color:#111111;-webkit-text-stroke:0.55px #111111;transform:scaleX(0.9869);transform-origin:0 0;">Món đặt trước</div>
<div class="a" style="left:472.50px;top:421.61px;font-size:11px;color:#062f98;-webkit-text-stroke:0.3px #062f98;transform:scaleX(0.9890);transform-origin:0 0;">Thêm món</div>
<div class="a" style="left:822.00px;top:278.21px;font-size:11px;color:#111111;-webkit-text-stroke:0.55px #111111;transform:scaleX(0.9570);transform-origin:0 0;">Chi nhánh</div>
<div class="a" style="left:936.60px;top:277.61px;font-size:11px;color:#0d0d0d;-webkit-text-stroke:0.3px #0d0d0d;transform:scaleX(0.9772);transform-origin:0 0;">Chi nhánh trung tâm</div>
<svg class="a" style="left:1226px;top:277.5px" width="10" height="7" viewBox="0 0 10 7"><path d="M1 1l4 4 4-4" stroke="#161616" stroke-width="1.3" fill="none"/></svg>
<div class="a" style="left:936.6px;top:296px;width:305.8px;height:1px;background:#9a9a9a"></div>
<div class="a" style="left:822.00px;top:313.21px;font-size:11px;color:#111111;-webkit-text-stroke:0.55px #111111;transform:scaleX(0.9901);transform-origin:0 0;">Mã đặt bàn</div>
<div class="a" style="left:936.60px;top:313.21px;font-size:11px;color:#545454;-webkit-text-stroke:0.3px #545454;transform:scaleX(0.9912);transform-origin:0 0;">Mã tự động</div>
<div class="a" style="left:936.6px;top:331px;width:305.8px;height:1px;background:#9a9a9a"></div>
<div class="a" style="left:822.00px;top:348.21px;font-size:11px;color:#111111;-webkit-text-stroke:0.55px #111111;transform:scaleX(0.9592);transform-origin:0 0;">Số lượng khách</div>
<svg class="a" style="left:936px;top:347px" width="8" height="12" viewBox="0 0 8 12"><circle cx="4" cy="1.5" r="1.5" fill="#484848"/><path d="M0.8 3.3h6.4v4.4H5.6V11.8H2.4V7.7H0.8z" fill="#484848"/></svg>
<div class="a" style="left:950.00px;top:348.11px;font-size:11px;color:#2a2a2a;-webkit-text-stroke:0.15px #2a2a2a;transform:scaleX(0.9375);transform-origin:0 0;">Người lớn</div>
<div class="a" style="left:1027.88px;top:348.61px;font-size:11px;color:#0d0d0d;-webkit-text-stroke:0.3px #0d0d0d;">4</div>
<div class="a" style="left:1001px;top:366px;width:33px;height:1px;background:#9a9a9a"></div>
<svg class="a" style="left:1101.6px;top:347px" width="8" height="12" viewBox="0 0 8 12"><circle cx="4" cy="1.5" r="1.5" fill="#484848"/><path d="M0.8 3.3h6.4v4.4H5.6V11.8H2.4V7.7H0.8z" fill="#484848"/></svg>
<div class="a" style="left:1115.30px;top:348.11px;font-size:11px;color:#2a2a2a;-webkit-text-stroke:0.15px #2a2a2a;transform:scaleX(0.9641);transform-origin:0 0;">Trẻ em</div>
<div class="a" style="left:1179.88px;top:348.61px;font-size:11px;color:#0d0d0d;-webkit-text-stroke:0.3px #0d0d0d;">0</div>
<div class="a" style="left:1152px;top:366px;width:34px;height:1px;background:#9a9a9a"></div>
<div class="a" style="left:822.00px;top:383.31px;font-size:11px;color:#111111;-webkit-text-stroke:0.55px #111111;transform:scaleX(0.9414);transform-origin:0 0;">Thời lượng</div>
<div class="a" style="left:881.5px;top:383.2px;width:11.6px;height:11.6px;border-radius:50%;background:#767676"></div>
<div class="a" style="left:886.6px;top:385.6px;width:1.6px;height:1.6px;background:#a0a0a0"></div><div class="a" style="left:886.6px;top:388.2px;width:1.6px;height:4.2px;background:#a0a0a0"></div>
<div class="a" style="left:936.60px;top:382.81px;font-size:11px;color:#2a2a2a;-webkit-text-stroke:0.15px #2a2a2a;transform:scaleX(0.9221);transform-origin:0 0;">Giờ</div>
<svg class="a" style="left:974px;top:382.5px" width="10" height="7" viewBox="0 0 10 7"><path d="M1 1l4 4 4-4" stroke="#161616" stroke-width="1.3" fill="none"/></svg>
<div class="a" style="left:1023.88px;top:383.61px;font-size:11px;color:#0d0d0d;-webkit-text-stroke:0.3px #0d0d0d;">2</div>
<div class="a" style="left:997px;top:401px;width:33px;height:1px;background:#9a9a9a"></div>
<div class="a" style="left:822.00px;top:418.31px;font-size:11px;color:#111111;-webkit-text-stroke:0.55px #111111;transform:scaleX(0.9920);transform-origin:0 0;">Phòng/Bàn</div>
<div class="a" style="left:937px;top:414px;width:96px;height:19.5px;border-radius:10px;background:#969696"></div>
<div class="a" style="left:945.00px;top:418.11px;font-size:11px;color:#0d0d0d;-webkit-text-stroke:0.3px #0d0d0d;transform:scaleX(0.9608);transform-origin:0 0;">Phòng VIP10</div>
<svg class="a" style="left:1015.8px;top:419.6px" width="8" height="8" viewBox="0 0 8 8"><path d="M1 1l6 6M7 1l-6 6" stroke="#0d0d0d" stroke-width="1.7"/></svg>
<div class="a" style="left:936.6px;top:436px;width:305.8px;height:1px;background:#9a9a9a"></div>
<div class="a" style="left:1172.20px;top:446.21px;font-size:11px;color:#062f98;-webkit-text-stroke:0.3px #062f98;transform:scaleX(0.9757);transform-origin:0 0;">Xem bàn trống</div>
<svg class="a" style="left:822.5px;top:462.8px" width="11" height="11" viewBox="0 0 11 11"><path d="M1.3 9.7l.5-2.5L7.9 1.1l2 2-6.1 6.1z" stroke="#262626" stroke-width="1.1" fill="none"/></svg>
<div class="a" style="left:838.60px;top:465.41px;font-size:11px;color:#383838;-webkit-text-stroke:0.3px #383838;transform:scaleX(0.9414);transform-origin:0 0;">Ghi chú</div>
<div class="a" style="left:822px;top:484px;width:420.6px;height:1px;background:#9a9a9a"></div>
<div class="a" style="left:970.9px;top:518.9px;width:88.1px;height:33px;border-radius:8px;background:#00157f"></div>
<svg class="a" style="left:984.6px;top:529.5px" width="11" height="12" viewBox="0 0 11 12"><path d="M1 1h7.2L10 2.8V11H1z" stroke="#bcbcbc" stroke-width="1.3" fill="none"/><rect x="3" y="1" width="4" height="2.6" stroke="#bcbcbc" stroke-width="1" fill="none"/><circle cx="5.5" cy="7.5" r="1.3" fill="#bcbcbc"/></svg>
<div class="a" style="left:1001.90px;top:528.88px;font-size:12.5px;color:#bcbcbc;font-weight:bold;transform:scaleX(0.8384);transform-origin:0 0;">Lưu &amp; In</div>
<div class="a" style="left:1067.8px;top:518.9px;width:82.4px;height:33px;border-radius:8px;background:#00157f"></div>
<svg class="a" style="left:1090px;top:529.5px" width="11" height="12" viewBox="0 0 11 12"><path d="M1 1h7.2L10 2.8V11H1z" stroke="#bcbcbc" stroke-width="1.3" fill="none"/><rect x="3" y="1" width="4" height="2.6" stroke="#bcbcbc" stroke-width="1" fill="none"/><circle cx="5.5" cy="7.5" r="1.3" fill="#bcbcbc"/></svg>
<div class="a" style="left:1107.50px;top:528.88px;font-size:12.5px;color:#bcbcbc;font-weight:bold;transform:scaleX(0.8221);transform-origin:0 0;">Lưu</div>
<div class="a" style="left:1159.2px;top:518.9px;width:82.8px;height:33px;border-radius:8px;background:#333538"></div>
<svg class="a" style="left:1173px;top:528.8px" width="13" height="13" viewBox="0 0 13 13"><circle cx="6.5" cy="6.5" r="5.5" stroke="#bcbcbc" stroke-width="1.7" fill="none"/><path d="M2.7 2.7l7.6 7.6" stroke="#bcbcbc" stroke-width="1.7"/></svg>
<div class="a" style="left:1191.60px;top:528.88px;font-size:12.5px;color:#bcbcbc;font-weight:bold;transform:scaleX(0.8664);transform-origin:0 0;">Bỏ qua</div>
</body></html>
